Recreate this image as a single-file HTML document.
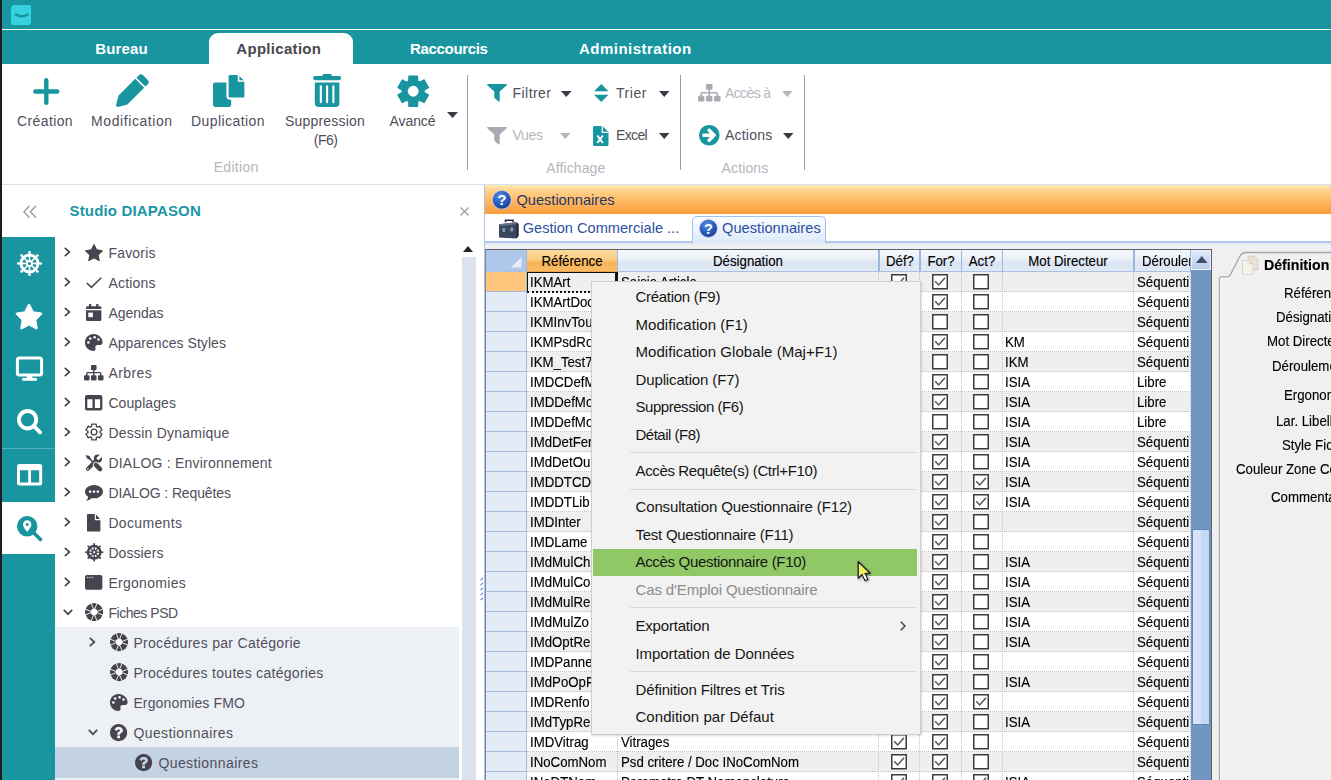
<!DOCTYPE html>
<html lang="fr"><head><meta charset="utf-8"><title>Studio DIAPASON</title>
<style>
html,body{margin:0;padding:0;}
body{width:1331px;height:780px;overflow:hidden;position:relative;background:#fff;font-family:"Liberation Sans",sans-serif;}
#app{position:absolute;left:0;top:0;width:1331px;height:780px;overflow:hidden;}
svg{display:block;overflow:visible}
</style></head><body><div id="app">
<div style="position:absolute;left:0px;top:0px;width:1331px;height:30px;background:#18959f;"></div>
<div style="position:absolute;left:0px;top:29px;width:1331px;height:1.2px;background:#f4fbfb;"></div>
<div style="position:absolute;left:0px;top:30px;width:1331px;height:34px;background:#18959f;"></div>
<div style="position:absolute;left:11.3px;top:4.9px;width:20.2px;height:20.2px;background:#35d1de;border-radius:3.5px 1.5px 3px 1px"></div>
<svg style="position:absolute;left:14px;top:12px;" width="16" height="7" viewBox="0 0 16 7"><path d="M1.800 2.500Q7.700 6 13.600 2.500" fill="none" stroke="#1b919c" stroke-width="2.400" stroke-linecap="round"/></svg>
<div style="position:absolute;left:209px;top:33px;width:144px;height:32px;background:#fff;border-radius:9px 9px 0 0"></div>
<span style="position:absolute;white-space:nowrap;left:121.5px;top:38.6px;line-height:20px;font-size:15px;color:#fff;font-weight:bold;letter-spacing:0.17px;transform:translateX(-50%);">Bureau</span>
<span style="position:absolute;white-space:nowrap;left:278.8px;top:38.6px;line-height:20px;font-size:15px;color:#4a4650;font-weight:bold;letter-spacing:0.3px;transform:translateX(-50%);">Application</span>
<span style="position:absolute;white-space:nowrap;left:448.8px;top:38.6px;line-height:20px;font-size:15px;color:#fff;font-weight:bold;letter-spacing:-0.34px;transform:translateX(-50%);">Raccourcis</span>
<span style="position:absolute;white-space:nowrap;left:635.3px;top:38.6px;line-height:20px;font-size:15px;color:#fff;font-weight:bold;letter-spacing:0.48px;transform:translateX(-50%);">Administration</span>
<div style="position:absolute;left:0px;top:64px;width:1331px;height:120px;background:#fff;"></div>
<div style="position:absolute;left:0px;top:184px;width:1331px;height:1px;background:#d3e2ec;"></div>
<svg style="position:absolute;left:32.6px;top:78px;" width="26.6" height="27" viewBox="0 0 26.6 27"><path d="M13.3 2.3V24.700M2.300 13.500H24.300" stroke="#18959f" stroke-width="4.400" stroke-linecap="round"/></svg>
<span style="position:absolute;white-space:nowrap;left:45px;top:111.0px;line-height:20px;font-size:14px;color:#514e5c;font-weight:normal;letter-spacing:0.39px;transform:translateX(-50%);">Création</span>
<svg style="position:absolute;left:116.2px;top:74.4px;" width="33" height="33" viewBox="0 0 33 33"><g transform="translate(16.5 16.5) rotate(-45)" fill="#18959f"><path d="M-13.6 -6.300H10.200V6.300H-13.600L-22 1.300Q-23.200 0 -22 -1.300z"/><path d="M11.900 -6.300H15.300a3 3 0 0 1 3 3V3.300a3 3 0 0 1 -3 3H11.900z"/></g></svg>
<span style="position:absolute;white-space:nowrap;left:131.9px;top:111.0px;line-height:20px;font-size:14px;color:#514e5c;font-weight:normal;letter-spacing:0.58px;transform:translateX(-50%);">Modification</span>
<svg style="position:absolute;left:212.5px;top:74.4px;" width="33" height="33.2" viewBox="0 0 33 33.2"><rect x="0" y="8.400" width="18.200" height="24.700" rx="2.300" fill="#18959f"/><path d="M14.500 2.300A2.300 2.300 0 0 1 16.800 0H26L32.500 6.500V22.300a2.300 2.300 0 0 1 -2.300 2.300H16.800a2.300 2.300 0 0 1 -2.300 -2.300z" fill="#18959f" stroke="#fff" stroke-width="2.200"/><path d="M25.600 -1V7H33.500" fill="none" stroke="#fff" stroke-width="1.700"/></svg>
<span style="position:absolute;white-space:nowrap;left:228px;top:111.0px;line-height:20px;font-size:14px;color:#514e5c;font-weight:normal;letter-spacing:0.43px;transform:translateX(-50%);">Duplication</span>
<svg style="position:absolute;left:313px;top:74.4px;" width="28.2" height="33.1" viewBox="0 0 28.2 33.1"><rect x="0" y="1.900" width="28.200" height="4.300" rx="2.150" fill="#18959f"/><path d="M8.400 3L10 0.400Q10.300 0 10.800 0H17.400Q17.900 0 18.200 0.400L19.800 3z" fill="#18959f"/><path d="M1.800 8.400H26.400V29.100a4 4 0 0 1 -4 4H5.800a4 4 0 0 1 -4 -4z" fill="#18959f"/><path d="M7.800 12.300V28.200M14.100 12.300V28.200M20.400 12.300V28.200" stroke="#fff" stroke-width="2.100" stroke-linecap="round"/></svg>
<span style="position:absolute;white-space:nowrap;left:325px;top:111.0px;line-height:20px;font-size:14px;color:#514e5c;font-weight:normal;letter-spacing:0.2px;transform:translateX(-50%);">Suppression</span>
<span style="position:absolute;white-space:nowrap;left:325.6px;top:130.0px;line-height:20px;font-size:14px;color:#514e5c;font-weight:normal;letter-spacing:-0.47px;transform:translateX(-50%);">(F6)</span>
<svg style="position:absolute;left:396.5px;top:74.6px;" width="32.4" height="32.5" viewBox="-16.2 -16.250 32.400 32.500"><path d="M4.21 -9.95 L4.11 -14.84 L-4.11 -14.84 L-4.21 -9.95 L-6.51 -8.62 L-10.80 -10.98 L-14.91 -3.86 L-10.72 -1.33 L-10.72 1.33 L-14.91 3.86 L-10.80 10.98 L-6.51 8.62 L-4.21 9.95 L-4.11 14.84 L4.11 14.84 L4.21 9.95 L6.51 8.62 L10.80 10.98 L14.91 3.86 L10.72 1.33 L10.72 -1.33 L14.91 -3.86 L10.80 -10.98 L6.51 -8.62z" fill="#18959f" stroke="#18959f" stroke-width="1.800" stroke-linejoin="round"/><circle r="10.900" fill="#18959f"/><circle r="5.400" fill="#fff"/></svg>
<span style="position:absolute;white-space:nowrap;left:412.5px;top:111.0px;line-height:20px;font-size:14px;color:#514e5c;font-weight:normal;letter-spacing:-0.07px;transform:translateX(-50%);">Avancé</span>
<svg style="position:absolute;left:446.5px;top:112px;" width="11" height="6" viewBox="0 0 11 6"><path d="M0 0h11l-5.5 6z" fill="#3c3946"/></svg>
<span style="position:absolute;white-space:nowrap;left:236.2px;top:157.0px;line-height:20px;font-size:14px;color:#b4b6c0;font-weight:normal;letter-spacing:0.31px;transform:translateX(-50%);">Edition</span>
<div style="position:absolute;left:467px;top:75px;width:1.4px;height:95px;background:#9b9ca6;"></div>
<div style="position:absolute;left:680px;top:75px;width:1.4px;height:95px;background:#9b9ca6;"></div>
<div style="position:absolute;left:804px;top:75px;width:1.4px;height:95px;background:#9b9ca6;"></div>
<svg style="position:absolute;left:487px;top:84px;" width="20.00" height="17.50" viewBox="-1.0208333333333357 -1280 1410.0416666666665 1408" preserveAspectRatio="none"><path transform="scale(1,-1)" fill="#18959f" d="M1403 1241Q1420 1200 1389 1171L896 678V-64Q896 -106 857 -123Q844 -128 832 -128Q805 -128 787 -109L531 147Q512 166 512 192V678L19 1171Q-12 1200 5 1241Q22 1280 64 1280H1344Q1386 1280 1403 1241Z"/></svg>
<span style="position:absolute;white-space:nowrap;left:512.5px;top:82.5px;line-height:20px;font-size:14px;color:#514e5c;font-weight:normal;letter-spacing:0.46px;">Filtrer</span>
<svg style="position:absolute;left:560.5px;top:90.5px;" width="10.5" height="6" viewBox="0 0 10.5 6"><path d="M0 0h10.5l-5.25 6z" fill="#3c3946"/></svg>
<svg style="position:absolute;left:593.5px;top:84px;" width="14.5" height="18" viewBox="0 0 14.5 18"><path d="M7.25 0l7.25 7.3H0zM7.25 18l7.25-7.3H0z" fill="#18959f"/></svg>
<span style="position:absolute;white-space:nowrap;left:616px;top:82.5px;line-height:20px;font-size:14px;color:#514e5c;font-weight:normal;letter-spacing:0.55px;">Trier</span>
<svg style="position:absolute;left:659px;top:90.5px;" width="10.5" height="6" viewBox="0 0 10.5 6"><path d="M0 0h10.5l-5.25 6z" fill="#3c3946"/></svg>
<svg style="position:absolute;left:698px;top:84px;" width="22.50" height="17.50" viewBox="0 -1408 1792 1536" preserveAspectRatio="none"><path transform="scale(1,-1)" fill="#a9abb3" d="M1792 288V-32Q1792 -72 1764.0 -100.0Q1736 -128 1696 -128H1376Q1336 -128 1308.0 -100.0Q1280 -72 1280 -32V288Q1280 328 1308.0 356.0Q1336 384 1376 384H1472V576H960V384H1056Q1096 384 1124.0 356.0Q1152 328 1152 288V-32Q1152 -72 1124.0 -100.0Q1096 -128 1056 -128H736Q696 -128 668.0 -100.0Q640 -72 640 -32V288Q640 328 668.0 356.0Q696 384 736 384H832V576H320V384H416Q456 384 484.0 356.0Q512 328 512 288V-32Q512 -72 484.0 -100.0Q456 -128 416 -128H96Q56 -128 28.0 -100.0Q0 -72 0 -32V288Q0 328 28.0 356.0Q56 384 96 384H192V576Q192 628 230.0 666.0Q268 704 320 704H832V896H736Q696 896 668.0 924.0Q640 952 640 992V1312Q640 1352 668.0 1380.0Q696 1408 736 1408H1056Q1096 1408 1124.0 1380.0Q1152 1352 1152 1312V992Q1152 952 1124.0 924.0Q1096 896 1056 896H960V704H1472Q1524 704 1562.0 666.0Q1600 628 1600 576V384H1696Q1736 384 1764.0 356.0Q1792 328 1792 288Z"/></svg>
<span style="position:absolute;white-space:nowrap;left:725px;top:82.5px;line-height:20px;font-size:14px;color:#b4b6c0;font-weight:normal;letter-spacing:-0.61px;">Accès à</span>
<svg style="position:absolute;left:781.5px;top:90.5px;" width="10.5" height="6" viewBox="0 0 10.5 6"><path d="M0 0h10.5l-5.25 6z" fill="#b4b6c0"/></svg>
<svg style="position:absolute;left:487px;top:126.5px;" width="20.00" height="17.50" viewBox="-1.0208333333333357 -1280 1410.0416666666665 1408" preserveAspectRatio="none"><path transform="scale(1,-1)" fill="#a9abb3" d="M1403 1241Q1420 1200 1389 1171L896 678V-64Q896 -106 857 -123Q844 -128 832 -128Q805 -128 787 -109L531 147Q512 166 512 192V678L19 1171Q-12 1200 5 1241Q22 1280 64 1280H1344Q1386 1280 1403 1241Z"/></svg>
<span style="position:absolute;white-space:nowrap;left:512.5px;top:125.0px;line-height:20px;font-size:14px;color:#b4b6c0;font-weight:normal;letter-spacing:-0.27px;">Vues</span>
<svg style="position:absolute;left:560px;top:133px;" width="10.5" height="6" viewBox="0 0 10.5 6"><path d="M0 0h10.5l-5.25 6z" fill="#b4b6c0"/></svg>
<svg style="position:absolute;left:593px;top:125.5px;" width="15.5" height="20" viewBox="0 0 15.5 20"><path d="M0 1.5A1.5 1.5 0 0 1 1.5 0H9.5l6 6v12.5a1.5 1.5 0 0 1-1.5 1.5H1.5A1.5 1.5 0 0 1 0 18.5z" fill="#18959f"/><path d="M9.3 0.3v6h6" fill="none" stroke="#fff" stroke-width="1.3"/><path d="M4.3 9.5l5.6 7.5M9.9 9.5l-5.6 7.5" stroke="#fff" stroke-width="2" /></svg>
<span style="position:absolute;white-space:nowrap;left:616px;top:125.0px;line-height:20px;font-size:14px;color:#514e5c;font-weight:normal;letter-spacing:-0.65px;">Excel</span>
<svg style="position:absolute;left:659px;top:133px;" width="10.5" height="6" viewBox="0 0 10.5 6"><path d="M0 0h10.5l-5.25 6z" fill="#3c3946"/></svg>
<svg style="position:absolute;left:699px;top:125px;" width="20.50" height="20.50" viewBox="0.0 -1408.0 1536.0 1536.0" preserveAspectRatio="none"><path transform="scale(1,-1)" fill="#18959f" d="M1267 685 1176 776 814 1138Q796 1156 769.0 1156.0Q742 1156 724 1138L633 1047Q615 1029 615.0 1002.0Q615 975 633 957L822 768H320Q294 768 275.0 749.0Q256 730 256 704V576Q256 550 275.0 531.0Q294 512 320 512H822L633 323Q614 304 614.0 278.0Q614 252 633 233L724 142Q742 124 769.0 124.0Q796 124 814 142L1176 504L1267 595Q1285 613 1285.0 640.0Q1285 667 1267 685ZM1433.0 1025.5Q1536 849 1536.0 640.0Q1536 431 1433.0 254.5Q1330 78 1153.5 -25.0Q977 -128 768.0 -128.0Q559 -128 382.5 -25.0Q206 78 103.0 254.5Q0 431 0.0 640.0Q0 849 103.0 1025.5Q206 1202 382.5 1305.0Q559 1408 768.0 1408.0Q977 1408 1153.5 1305.0Q1330 1202 1433.0 1025.5Z"/></svg>
<span style="position:absolute;white-space:nowrap;left:725px;top:125.0px;line-height:20px;font-size:14px;color:#514e5c;font-weight:normal;letter-spacing:0.21px;">Actions</span>
<svg style="position:absolute;left:783px;top:133px;" width="10.5" height="6" viewBox="0 0 10.5 6"><path d="M0 0h10.5l-5.25 6z" fill="#3c3946"/></svg>
<span style="position:absolute;white-space:nowrap;left:575.8px;top:157.5px;line-height:20px;font-size:14px;color:#b4b6c0;font-weight:normal;letter-spacing:0.12px;transform:translateX(-50%);">Affichage</span>
<span style="position:absolute;white-space:nowrap;left:745px;top:157.5px;line-height:20px;font-size:14px;color:#b4b6c0;font-weight:normal;letter-spacing:0.13px;transform:translateX(-50%);">Actions</span>
<svg style="position:absolute;left:23px;top:204.5px;" width="14" height="13.5" viewBox="0 0 14 13.5"><path d="M6.5 0.7L1 6.75l5.5 6.05M13 0.7L7.5 6.75l5.5 6.05" fill="none" stroke="#9c9eaa" stroke-width="1.5"/></svg>
<span style="position:absolute;white-space:nowrap;left:69.5px;top:200.5px;line-height:20px;font-size:15px;color:#1a96a6;font-weight:bold;letter-spacing:0.17px;">Studio DIAPASON</span>
<svg style="position:absolute;left:459.5px;top:207px;" width="9" height="9" viewBox="0 0 9 9"><path d="M0.5 0.5l8 8M8.5 0.5l-8 8" stroke="#9c9eaa" stroke-width="1.3"/></svg>
<div style="position:absolute;left:2px;top:237px;width:52.5px;height:543px;background:#18959f;"></div>
<div style="position:absolute;left:2px;top:501.6px;width:52.5px;height:52.6px;background:#fff;"></div>
<div style="position:absolute;left:2px;top:447.6px;width:52.5px;height:1.2px;background:#4fb3bb;"></div>
<svg style="position:absolute;left:16.5px;top:250.5px;" width="25.0" height="25.0" viewBox="-12.5 -12.5 25.0 25.0"><circle cx="0" cy="0" r="8.5" fill="none" stroke="#fff" stroke-width="3"/><circle cx="0" cy="0" r="2.5" fill="none" stroke="#fff" stroke-width="1.7999999999999998"/><path d="M2.50 0.00L11.00 0.00" stroke="#fff" stroke-width="1.6500000000000001"/><circle cx="11.25" cy="0.00" r="1.31" fill="#fff"/><path d="M1.77 1.77L7.78 7.78" stroke="#fff" stroke-width="1.6500000000000001"/><circle cx="7.95" cy="7.95" r="1.31" fill="#fff"/><path d="M0.00 2.50L0.00 11.00" stroke="#fff" stroke-width="1.6500000000000001"/><circle cx="0.00" cy="11.25" r="1.31" fill="#fff"/><path d="M-1.77 1.77L-7.78 7.78" stroke="#fff" stroke-width="1.6500000000000001"/><circle cx="-7.95" cy="7.95" r="1.31" fill="#fff"/><path d="M-2.50 0.00L-11.00 0.00" stroke="#fff" stroke-width="1.6500000000000001"/><circle cx="-11.25" cy="0.00" r="1.31" fill="#fff"/><path d="M-1.77 -1.77L-7.78 -7.78" stroke="#fff" stroke-width="1.6500000000000001"/><circle cx="-7.95" cy="-7.95" r="1.31" fill="#fff"/><path d="M-0.00 -2.50L-0.00 -11.00" stroke="#fff" stroke-width="1.6500000000000001"/><circle cx="-0.00" cy="-11.25" r="1.31" fill="#fff"/><path d="M1.77 -1.77L7.78 -7.78" stroke="#fff" stroke-width="1.6500000000000001"/><circle cx="7.95" cy="-7.95" r="1.31" fill="#fff"/></svg>
<svg style="position:absolute;left:16px;top:303.5px;" width="26.00" height="25.00" viewBox="0 -1504.0 1664 1587.0" preserveAspectRatio="none"><path transform="scale(1,-1)" fill="#fff" stroke="#fff" stroke-width="60" d="M1664 889Q1664 867 1638 841L1275 487L1361 -13Q1362 -20 1362 -33Q1362 -54 1351.5 -68.5Q1341 -83 1321 -83Q1302 -83 1281 -71L832 165L383 -71Q361 -83 343 -83Q322 -83 311.5 -68.5Q301 -54 301 -33Q301 -27 303 -13L389 487L25 841Q0 868 0 889Q0 926 56 935L558 1008L783 1463Q802 1504 832.0 1504.0Q862 1504 881 1463L1106 1008L1608 935Q1664 926 1664 889Z"/></svg>
<svg style="position:absolute;left:15px;top:355px;" width="29" height="27" viewBox="0 0 29 27"><rect x="2.400" y="3" width="24.200" height="17" rx="2" fill="none" stroke="#fff" stroke-width="3"/><path d="M11.800 21h5.400l0.600 3h-6.600z" fill="#fff"/><rect x="7" y="23" width="15" height="2.800" rx="1.200" fill="#fff"/></svg>
<svg style="position:absolute;left:16.8px;top:408.5px;" width="25.00" height="25.30" viewBox="0.0 -1408.0 1664.0 1664.0" preserveAspectRatio="none"><path transform="scale(1,-1)" fill="#fff" d="M1020.5 387.5Q1152 519 1152.0 704.0Q1152 889 1020.5 1020.5Q889 1152 704.0 1152.0Q519 1152 387.5 1020.5Q256 889 256.0 704.0Q256 519 387.5 387.5Q519 256 704.0 256.0Q889 256 1020.5 387.5ZM1664 -128Q1664 -180 1626.0 -218.0Q1588 -256 1536 -256Q1482 -256 1446 -218L1103 124Q924 0 704 0Q561 0 430.5 55.5Q300 111 205.5 205.5Q111 300 55.5 430.5Q0 561 0.0 704.0Q0 847 55.5 977.5Q111 1108 205.5 1202.5Q300 1297 430.5 1352.5Q561 1408 704.0 1408.0Q847 1408 977.5 1352.5Q1108 1297 1202.5 1202.5Q1297 1108 1352.5 977.5Q1408 847 1408 704Q1408 484 1284 305L1627 -38Q1664 -75 1664 -128Z"/></svg>
<svg style="position:absolute;left:16.8px;top:464px;" preserveAspectRatio="none" width="25.2" height="21.6" viewBox="0 0 25.2 21.6"><path fill-rule="evenodd" fill="#fff" d="M2.500 0H22.700a2.500 2.500 0 0 1 2.500 2.500V19.100a2.500 2.500 0 0 1 -2.500 2.500H2.500a2.500 2.500 0 0 1 -2.500 -2.500V2.500a2.500 2.500 0 0 1 2.500 -2.500zM3 6.200V18.600H11.200V6.200zM14 6.200V18.600H22.200V6.200z"/></svg>
<svg style="position:absolute;left:16.8px;top:516px;" width="25.2" height="25.2" viewBox="0 0 25.2 25.2"><path d="M16.500 16.500L23.500 23.500" stroke="#18959f" stroke-width="3.600" stroke-linecap="round"/><circle cx="10.200" cy="10.200" r="10.200" fill="#18959f"/><path d="M10.200 4.300c-2.400 0-4.200 1.800-4.200 4.100 0 2.600 3 5.600 4.200 7.700 1.200-2.100 4.200-5.100 4.200-7.700 0-2.300-1.800-4.100-4.200-4.100z" fill="#fff"/><circle cx="10.200" cy="8.400" r="1.500" fill="#18959f"/></svg>
<div style="position:absolute;left:54.5px;top:627px;width:404.5px;height:153px;background:#edf1f5;"></div>
<div style="position:absolute;left:54.5px;top:747px;width:404.5px;height:30.5px;background:#c4d3e3;"></div>
<svg style="position:absolute;left:64px;top:247.0px;" width="7" height="10" viewBox="0 0 7 10"><path d="M0.8 0.8L5.4 5L0.8 9.2" fill="none" stroke="#4b4856" stroke-width="1.7"/></svg>
<svg style="position:absolute;left:84.8px;top:243.60000000000002px;" width="18.00" height="17.20" viewBox="0 -1504.0 1664 1587.0" preserveAspectRatio="none"><path transform="scale(1,-1)" fill="#47444f" d="M1664 889Q1664 867 1638 841L1275 487L1361 -13Q1362 -20 1362 -33Q1362 -54 1351.5 -68.5Q1341 -83 1321 -83Q1302 -83 1281 -71L832 165L383 -71Q361 -83 343 -83Q322 -83 311.5 -68.5Q301 -54 301 -33Q301 -27 303 -13L389 487L25 841Q0 868 0 889Q0 926 56 935L558 1008L783 1463Q802 1504 832.0 1504.0Q862 1504 881 1463L1106 1008L1608 935Q1664 926 1664 889Z"/></svg>
<span style="position:absolute;white-space:nowrap;left:108.4px;top:242.5px;line-height:20px;font-size:14px;color:#514e5c;font-weight:normal;letter-spacing:0.21px;">Favoris</span>
<svg style="position:absolute;left:64px;top:277.0px;" width="7" height="10" viewBox="0 0 7 10"><path d="M0.8 0.8L5.4 5L0.8 9.2" fill="none" stroke="#4b4856" stroke-width="1.7"/></svg>
<svg style="position:absolute;left:85.8px;top:276.8px;" width="16" height="11.5" viewBox="0 0 16 11.5"><path d="M0.8 6L5.4 10.3L15.2 0.8" fill="none" stroke="#47444f" stroke-width="1.6"/></svg>
<span style="position:absolute;white-space:nowrap;left:108.4px;top:272.5px;line-height:20px;font-size:14px;color:#514e5c;font-weight:normal;letter-spacing:0.21px;">Actions</span>
<svg style="position:absolute;left:64px;top:307.0px;" width="7" height="10" viewBox="0 0 7 10"><path d="M0.8 0.8L5.4 5L0.8 9.2" fill="none" stroke="#4b4856" stroke-width="1.7"/></svg>
<svg style="position:absolute;left:86.1px;top:303.8px;" width="15.4" height="17" viewBox="0 0 15.4 17"><path d="M3 0h2.2v2.2h5V0h2.2v2.2h1.5a1.5 1.5 0 0 1 1.5 1.5V5H0V3.7a1.5 1.5 0 0 1 1.5-1.5H3zM0 6.3h15.4v9.2a1.5 1.5 0 0 1-1.5 1.5H1.5A1.5 1.5 0 0 1 0 15.5z" fill="#47444f"/><rect x="2.3" y="8.6" width="4.6" height="4.6" fill="#fff"/></svg>
<span style="position:absolute;white-space:nowrap;left:108.4px;top:302.5px;line-height:20px;font-size:14px;color:#514e5c;font-weight:normal;letter-spacing:-0.02px;">Agendas</span>
<svg style="position:absolute;left:64px;top:337.0px;" width="7" height="10" viewBox="0 0 7 10"><path d="M0.8 0.8L5.4 5L0.8 9.2" fill="none" stroke="#4b4856" stroke-width="1.7"/></svg>
<svg style="position:absolute;left:85.0px;top:333.8px;" width="17.6" height="17" viewBox="0 0 17.6 17"><path d="M8.6 0C3.6 0 0 3.9 0 8.5S3.7 17 8.4 17c1.6 0 2.6-1.3 2.1-2.7-.6-1.6.4-3.3 2.2-3.3h2.5c1.4 0 2.4-1 2.4-2.5C17.5 3.600 13.6 0 8.600 0z" fill="#47444f"/><circle cx="3.4" cy="8.600" r="1.25" fill="#fff"/><circle cx="5.2" cy="4.5" r="1.25" fill="#fff"/><circle cx="9.6" cy="3.2" r="1.25" fill="#fff"/><circle cx="13.5" cy="5.4" r="1.25" fill="#fff"/></svg>
<span style="position:absolute;white-space:nowrap;left:108.4px;top:332.5px;line-height:20px;font-size:14px;color:#514e5c;font-weight:normal;letter-spacing:0.05px;">Apparences Styles</span>
<svg style="position:absolute;left:64px;top:367.0px;" width="7" height="10" viewBox="0 0 7 10"><path d="M0.8 0.8L5.4 5L0.8 9.2" fill="none" stroke="#4b4856" stroke-width="1.7"/></svg>
<svg style="position:absolute;left:84.0px;top:364.6px;" width="19.50" height="15.40" viewBox="0 -1408 1792 1536" preserveAspectRatio="none"><path transform="scale(1,-1)" fill="#47444f" d="M1792 288V-32Q1792 -72 1764.0 -100.0Q1736 -128 1696 -128H1376Q1336 -128 1308.0 -100.0Q1280 -72 1280 -32V288Q1280 328 1308.0 356.0Q1336 384 1376 384H1472V576H960V384H1056Q1096 384 1124.0 356.0Q1152 328 1152 288V-32Q1152 -72 1124.0 -100.0Q1096 -128 1056 -128H736Q696 -128 668.0 -100.0Q640 -72 640 -32V288Q640 328 668.0 356.0Q696 384 736 384H832V576H320V384H416Q456 384 484.0 356.0Q512 328 512 288V-32Q512 -72 484.0 -100.0Q456 -128 416 -128H96Q56 -128 28.0 -100.0Q0 -72 0 -32V288Q0 328 28.0 356.0Q56 384 96 384H192V576Q192 628 230.0 666.0Q268 704 320 704H832V896H736Q696 896 668.0 924.0Q640 952 640 992V1312Q640 1352 668.0 1380.0Q696 1408 736 1408H1056Q1096 1408 1124.0 1380.0Q1152 1352 1152 1312V992Q1152 952 1124.0 924.0Q1096 896 1056 896H960V704H1472Q1524 704 1562.0 666.0Q1600 628 1600 576V384H1696Q1736 384 1764.0 356.0Q1792 328 1792 288Z"/></svg>
<span style="position:absolute;white-space:nowrap;left:108.4px;top:362.5px;line-height:20px;font-size:14px;color:#514e5c;font-weight:normal;letter-spacing:0.44px;">Arbres</span>
<svg style="position:absolute;left:64px;top:397.0px;" width="7" height="10" viewBox="0 0 7 10"><path d="M0.8 0.8L5.4 5L0.8 9.2" fill="none" stroke="#4b4856" stroke-width="1.7"/></svg>
<svg style="position:absolute;left:85.1px;top:394.6px;" width="17.4" height="15.4" viewBox="0 0 17.4 15.4"><path fill-rule="evenodd" fill="#47444f" d="M2 0H15.400a2 2 0 0 1 2 2V13.400a2 2 0 0 1 -2 2H2a2 2 0 0 1 -2 -2V2a2 2 0 0 1 2 -2zM2.300 4.300V13.100H7.500V4.300zM9.900 4.300V13.100H15.100V4.300z"/></svg>
<span style="position:absolute;white-space:nowrap;left:108.4px;top:392.5px;line-height:20px;font-size:14px;color:#514e5c;font-weight:normal;letter-spacing:0.07px;">Couplages</span>
<svg style="position:absolute;left:64px;top:427.0px;" width="7" height="10" viewBox="0 0 7 10"><path d="M0.8 0.8L5.4 5L0.8 9.2" fill="none" stroke="#4b4856" stroke-width="1.7"/></svg>
<svg style="position:absolute;left:84.8px;top:423.3px;" width="18" height="18" viewBox="-9 -9 18 18"><path d="M2.38 -5.62 L2.19 -7.90 L-2.19 -7.90 L-2.38 -5.62 L-3.68 -4.87 L-5.75 -5.85 L-7.94 -2.06 L-6.05 -0.75 L-6.05 0.75 L-7.94 2.06 L-5.75 5.85 L-3.68 4.87 L-2.38 5.62 L-2.19 7.90 L2.19 7.90 L2.38 5.62 L3.68 4.87 L5.75 5.85 L7.94 2.06 L6.05 0.75 L6.05 -0.75 L7.94 -2.06 L5.75 -5.85 L3.68 -4.87z" fill="none" stroke="#47444f" stroke-width="1.350" stroke-linejoin="round"/><circle r="2.900" fill="none" stroke="#47444f" stroke-width="1.350"/></svg>
<span style="position:absolute;white-space:nowrap;left:108.4px;top:422.5px;line-height:20px;font-size:14px;color:#514e5c;font-weight:normal;letter-spacing:0.23px;">Dessin Dynamique</span>
<svg style="position:absolute;left:64px;top:457.0px;" width="7" height="10" viewBox="0 0 7 10"><path d="M0.8 0.8L5.4 5L0.8 9.2" fill="none" stroke="#4b4856" stroke-width="1.7"/></svg>
<svg style="position:absolute;left:85.0px;top:453.5px;" width="17.6" height="17.6" viewBox="0 0 17.6 17.6"><path d="M2.800 14.800L11.500 6.100" stroke="#47444f" stroke-width="3.800" stroke-linecap="round"/><circle cx="12.900" cy="4.700" r="4.100" fill="#47444f"/><path d="M12.300 5.300L18 -0.400" stroke="#fff" stroke-width="3"/><circle cx="2.900" cy="14.700" r="0.800" fill="#fff"/><path d="M0.300 0.700L4.600 1.700L6.300 5.100L5.100 6.300L1.700 4.600z" fill="#47444f" stroke="#fff" stroke-width="0.500"/><path d="M5 5L9.500 9.500" stroke="#47444f" stroke-width="1.700"/><path d="M10.900 10.900L15.100 15.100" stroke="#fff" stroke-width="6" stroke-linecap="round"/><path d="M10.900 10.900L15.100 15.100" stroke="#47444f" stroke-width="4.400" stroke-linecap="round"/></svg>
<span style="position:absolute;white-space:nowrap;left:108.4px;top:452.5px;line-height:20px;font-size:14px;color:#514e5c;font-weight:normal;letter-spacing:0.22px;">DIALOG : Environnement</span>
<svg style="position:absolute;left:64px;top:487.0px;" width="7" height="10" viewBox="0 0 7 10"><path d="M0.8 0.8L5.4 5L0.8 9.2" fill="none" stroke="#4b4856" stroke-width="1.7"/></svg>
<svg style="position:absolute;left:84.8px;top:484.5px;" width="18.00" height="15.60" viewBox="0 -1280.0 1792.0 1504.125" preserveAspectRatio="none"><path transform="scale(1,-1)" fill="#47444f" d="M602.5 549.5Q640 587 640.0 640.0Q640 693 602.5 730.5Q565 768 512.0 768.0Q459 768 421.5 730.5Q384 693 384.0 640.0Q384 587 421.5 549.5Q459 512 512.0 512.0Q565 512 602.5 549.5ZM986.5 549.5Q1024 587 1024.0 640.0Q1024 693 986.5 730.5Q949 768 896.0 768.0Q843 768 805.5 730.5Q768 693 768.0 640.0Q768 587 805.5 549.5Q843 512 896.0 512.0Q949 512 986.5 549.5ZM1370.5 549.5Q1408 587 1408.0 640.0Q1408 693 1370.5 730.5Q1333 768 1280.0 768.0Q1227 768 1189.5 730.5Q1152 693 1152.0 640.0Q1152 587 1189.5 549.5Q1227 512 1280.0 512.0Q1333 512 1370.5 549.5ZM896 0Q786 0 685 18Q512 -155 250 -211Q198 -221 164 -224Q152 -225 142.0 -218.0Q132 -211 129 -200Q125 -185 149 -163Q154 -158 172.5 -141.5Q191 -125 198.0 -118.0Q205 -111 221.5 -92.5Q238 -74 245.5 -61.0Q253 -48 266.0 -24.0Q279 0 286.0 24.0Q293 48 300.5 81.5Q308 115 313 154Q167 244 83.5 370.5Q0 497 0 640Q0 814 120.0 961.5Q240 1109 446.0 1194.5Q652 1280 896.0 1280.0Q1140 1280 1346.0 1194.5Q1552 1109 1672.0 961.5Q1792 814 1792.0 640.0Q1792 466 1672.0 318.5Q1552 171 1346.0 85.5Q1140 0 896 0Z"/></svg>
<span style="position:absolute;white-space:nowrap;left:108.4px;top:482.5px;line-height:20px;font-size:14px;color:#514e5c;font-weight:normal;letter-spacing:-0.12px;">DIALOG : Requêtes</span>
<svg style="position:absolute;left:64px;top:517.0px;" width="7" height="10" viewBox="0 0 7 10"><path d="M0.8 0.8L5.4 5L0.8 9.2" fill="none" stroke="#4b4856" stroke-width="1.7"/></svg>
<svg style="position:absolute;left:87.1px;top:513.5px;" width="13.40" height="17.60" viewBox="0 -1536 1536 1792" preserveAspectRatio="none"><path transform="scale(1,-1)" fill="#47444f" d="M1024 1024V1496Q1046 1482 1060 1468L1468 1060Q1482 1046 1496 1024ZM896 992Q896 952 924.0 924.0Q952 896 992 896H1536V-160Q1536 -200 1508.0 -228.0Q1480 -256 1440 -256H96Q56 -256 28.0 -228.0Q0 -200 0 -160V1440Q0 1480 28.0 1508.0Q56 1536 96 1536H896Z"/></svg>
<span style="position:absolute;white-space:nowrap;left:108.4px;top:512.5px;line-height:20px;font-size:14px;color:#514e5c;font-weight:normal;letter-spacing:0.34px;">Documents</span>
<svg style="position:absolute;left:64px;top:547.0px;" width="7" height="10" viewBox="0 0 7 10"><path d="M0.8 0.8L5.4 5L0.8 9.2" fill="none" stroke="#4b4856" stroke-width="1.7"/></svg>
<svg style="position:absolute;left:84.6px;top:543.0999999999999px;" width="18.4" height="18.4" viewBox="-9.2 -9.2 18.4 18.4"><circle cx="0" cy="0" r="6.256" fill="none" stroke="#47444f" stroke-width="2.5"/><circle cx="0" cy="0" r="1.8399999999999999" fill="none" stroke="#47444f" stroke-width="1.5"/><path d="M1.84 0.00L8.10 0.00" stroke="#47444f" stroke-width="1.375"/><circle cx="8.28" cy="0.00" r="0.97" fill="#47444f"/><path d="M1.30 1.30L5.72 5.72" stroke="#47444f" stroke-width="1.375"/><circle cx="5.85" cy="5.85" r="0.97" fill="#47444f"/><path d="M0.00 1.84L0.00 8.10" stroke="#47444f" stroke-width="1.375"/><circle cx="0.00" cy="8.28" r="0.97" fill="#47444f"/><path d="M-1.30 1.30L-5.72 5.72" stroke="#47444f" stroke-width="1.375"/><circle cx="-5.85" cy="5.85" r="0.97" fill="#47444f"/><path d="M-1.84 0.00L-8.10 0.00" stroke="#47444f" stroke-width="1.375"/><circle cx="-8.28" cy="0.00" r="0.97" fill="#47444f"/><path d="M-1.30 -1.30L-5.72 -5.72" stroke="#47444f" stroke-width="1.375"/><circle cx="-5.85" cy="-5.85" r="0.97" fill="#47444f"/><path d="M-0.00 -1.84L-0.00 -8.10" stroke="#47444f" stroke-width="1.375"/><circle cx="-0.00" cy="-8.28" r="0.97" fill="#47444f"/><path d="M1.30 -1.30L5.72 -5.72" stroke="#47444f" stroke-width="1.375"/><circle cx="5.85" cy="-5.85" r="0.97" fill="#47444f"/></svg>
<span style="position:absolute;white-space:nowrap;left:108.4px;top:542.5px;line-height:20px;font-size:14px;color:#514e5c;font-weight:normal;letter-spacing:0.08px;">Dossiers</span>
<svg style="position:absolute;left:64px;top:577.0px;" width="7" height="10" viewBox="0 0 7 10"><path d="M0.8 0.8L5.4 5L0.8 9.2" fill="none" stroke="#4b4856" stroke-width="1.7"/></svg>
<svg style="position:absolute;left:85.1px;top:574.9px;" width="17.4" height="14.8" viewBox="0 0 17.4 14.8"><rect width="17.400" height="14.800" rx="2" fill="#47444f"/><circle cx="2.600" cy="2.500" r="0.800" fill="#c9c9d0"/><circle cx="4.900" cy="2.500" r="0.800" fill="#c9c9d0"/><circle cx="7.200" cy="2.500" r="0.800" fill="#c9c9d0"/></svg>
<span style="position:absolute;white-space:nowrap;left:108.4px;top:572.5px;line-height:20px;font-size:14px;color:#514e5c;font-weight:normal;letter-spacing:0.29px;">Ergonomies</span>
<svg style="position:absolute;left:62.5px;top:609.0px;" width="10" height="6.5" viewBox="0 0 10 6.5"><path d="M0.8 0.8L5 5.2L9.2 0.8" fill="none" stroke="#4b4856" stroke-width="1.7"/></svg>
<svg style="position:absolute;left:84.7px;top:603.1999999999999px;" width="18.2" height="18.2" viewBox="-9.1 -9.1 18.2 18.2"><circle r="9.1" fill="#47444f"/><circle r="3.300" fill="#fff"/><path d="M2.95 -0.54L9.08 -3.11" stroke="#fff" stroke-width="0.900"/><path d="M2.95 0.54L9.08 3.11" stroke="#fff" stroke-width="0.900"/><path d="M0.54 2.95L3.11 9.08" stroke="#fff" stroke-width="0.900"/><path d="M-0.54 2.95L-3.11 9.08" stroke="#fff" stroke-width="0.900"/><path d="M-2.95 0.54L-9.08 3.11" stroke="#fff" stroke-width="0.900"/><path d="M-2.95 -0.54L-9.08 -3.11" stroke="#fff" stroke-width="0.900"/><path d="M-0.54 -2.95L-3.11 -9.08" stroke="#fff" stroke-width="0.900"/><path d="M0.54 -2.95L3.11 -9.08" stroke="#fff" stroke-width="0.900"/></svg>
<span style="position:absolute;white-space:nowrap;left:108.4px;top:602.5px;line-height:20px;font-size:14px;color:#514e5c;font-weight:normal;letter-spacing:-0.46px;">Fiches PSD</span>
<svg style="position:absolute;left:89px;top:637.0px;" width="7" height="10" viewBox="0 0 7 10"><path d="M0.8 0.8L5.4 5L0.8 9.2" fill="none" stroke="#4b4856" stroke-width="1.7"/></svg>
<svg style="position:absolute;left:109.7px;top:633.1999999999999px;" width="18.2" height="18.2" viewBox="-9.1 -9.1 18.2 18.2"><circle r="9.1" fill="#47444f"/><circle r="3.300" fill="#fff"/><path d="M2.95 -0.54L9.08 -3.11" stroke="#fff" stroke-width="0.900"/><path d="M2.95 0.54L9.08 3.11" stroke="#fff" stroke-width="0.900"/><path d="M0.54 2.95L3.11 9.08" stroke="#fff" stroke-width="0.900"/><path d="M-0.54 2.95L-3.11 9.08" stroke="#fff" stroke-width="0.900"/><path d="M-2.95 0.54L-9.08 3.11" stroke="#fff" stroke-width="0.900"/><path d="M-2.95 -0.54L-9.08 -3.11" stroke="#fff" stroke-width="0.900"/><path d="M-0.54 -2.95L-3.11 -9.08" stroke="#fff" stroke-width="0.900"/><path d="M0.54 -2.95L3.11 -9.08" stroke="#fff" stroke-width="0.900"/></svg>
<span style="position:absolute;white-space:nowrap;left:133.4px;top:632.5px;line-height:20px;font-size:14px;color:#514e5c;font-weight:normal;letter-spacing:0.3px;">Procédures par Catégorie</span>
<svg style="position:absolute;left:109.7px;top:663.1999999999999px;" width="18.2" height="18.2" viewBox="-9.1 -9.1 18.2 18.2"><circle r="9.1" fill="#47444f"/><circle r="3.300" fill="#fff"/><path d="M2.95 -0.54L9.08 -3.11" stroke="#fff" stroke-width="0.900"/><path d="M2.95 0.54L9.08 3.11" stroke="#fff" stroke-width="0.900"/><path d="M0.54 2.95L3.11 9.08" stroke="#fff" stroke-width="0.900"/><path d="M-0.54 2.95L-3.11 9.08" stroke="#fff" stroke-width="0.900"/><path d="M-2.95 0.54L-9.08 3.11" stroke="#fff" stroke-width="0.900"/><path d="M-2.95 -0.54L-9.08 -3.11" stroke="#fff" stroke-width="0.900"/><path d="M-0.54 -2.95L-3.11 -9.08" stroke="#fff" stroke-width="0.900"/><path d="M0.54 -2.95L3.11 -9.08" stroke="#fff" stroke-width="0.900"/></svg>
<span style="position:absolute;white-space:nowrap;left:133.4px;top:662.5px;line-height:20px;font-size:14px;color:#514e5c;font-weight:normal;letter-spacing:0.29px;">Procédures toutes catégories</span>
<svg style="position:absolute;left:110.0px;top:693.8px;" width="17.6" height="17" viewBox="0 0 17.6 17"><path d="M8.6 0C3.6 0 0 3.9 0 8.5S3.7 17 8.4 17c1.6 0 2.6-1.3 2.1-2.7-.6-1.6.4-3.3 2.2-3.3h2.5c1.4 0 2.4-1 2.4-2.5C17.5 3.600 13.6 0 8.600 0z" fill="#47444f"/><circle cx="3.4" cy="8.600" r="1.25" fill="#fff"/><circle cx="5.2" cy="4.5" r="1.25" fill="#fff"/><circle cx="9.6" cy="3.2" r="1.25" fill="#fff"/><circle cx="13.5" cy="5.4" r="1.25" fill="#fff"/></svg>
<span style="position:absolute;white-space:nowrap;left:133.4px;top:692.5px;line-height:20px;font-size:14px;color:#514e5c;font-weight:normal;letter-spacing:0.14px;">Ergonomies FMO</span>
<svg style="position:absolute;left:87.5px;top:729.0px;" width="10" height="6.5" viewBox="0 0 10 6.5"><path d="M0.8 0.8L5 5.2L9.2 0.8" fill="none" stroke="#4b4856" stroke-width="1.7"/></svg>
<svg style="position:absolute;left:110.2px;top:723.6999999999999px;" width="17.20" height="17.20" viewBox="0.0 -1408.0 1536.0 1536.0" preserveAspectRatio="none"><path transform="scale(1,-1)" fill="#47444f" d="M896 160V352Q896 366 887.0 375.0Q878 384 864 384H672Q658 384 649.0 375.0Q640 366 640 352V160Q640 146 649.0 137.0Q658 128 672 128H864Q878 128 887.0 137.0Q896 146 896 160ZM1152 832Q1152 920 1096.5 995.0Q1041 1070 958.0 1111.0Q875 1152 788 1152Q545 1152 417 939Q402 915 425 897L557 797Q564 791 576 791Q592 791 601 803Q654 871 687 895Q721 919 773 919Q821 919 858.5 893.0Q896 867 896 834Q896 796 876.0 773.0Q856 750 808 728Q745 700 692.5 641.5Q640 583 640 516V480Q640 466 649.0 457.0Q658 448 672 448H864Q878 448 887.0 457.0Q896 466 896 480Q896 499 917.5 529.5Q939 560 972 579Q1004 597 1021.0 607.5Q1038 618 1067.0 642.5Q1096 667 1111.5 690.5Q1127 714 1139.5 751.0Q1152 788 1152 832ZM1433.0 1025.5Q1536 849 1536.0 640.0Q1536 431 1433.0 254.5Q1330 78 1153.5 -25.0Q977 -128 768.0 -128.0Q559 -128 382.5 -25.0Q206 78 103.0 254.5Q0 431 0.0 640.0Q0 849 103.0 1025.5Q206 1202 382.5 1305.0Q559 1408 768.0 1408.0Q977 1408 1153.5 1305.0Q1330 1202 1433.0 1025.5Z"/></svg>
<span style="position:absolute;white-space:nowrap;left:133.4px;top:722.5px;line-height:20px;font-size:14px;color:#514e5c;font-weight:normal;letter-spacing:0.42px;">Questionnaires</span>
<svg style="position:absolute;left:135.20000000000002px;top:753.6999999999999px;" width="17.20" height="17.20" viewBox="0.0 -1408.0 1536.0 1536.0" preserveAspectRatio="none"><path transform="scale(1,-1)" fill="#47444f" d="M896 160V352Q896 366 887.0 375.0Q878 384 864 384H672Q658 384 649.0 375.0Q640 366 640 352V160Q640 146 649.0 137.0Q658 128 672 128H864Q878 128 887.0 137.0Q896 146 896 160ZM1152 832Q1152 920 1096.5 995.0Q1041 1070 958.0 1111.0Q875 1152 788 1152Q545 1152 417 939Q402 915 425 897L557 797Q564 791 576 791Q592 791 601 803Q654 871 687 895Q721 919 773 919Q821 919 858.5 893.0Q896 867 896 834Q896 796 876.0 773.0Q856 750 808 728Q745 700 692.5 641.5Q640 583 640 516V480Q640 466 649.0 457.0Q658 448 672 448H864Q878 448 887.0 457.0Q896 466 896 480Q896 499 917.5 529.5Q939 560 972 579Q1004 597 1021.0 607.5Q1038 618 1067.0 642.5Q1096 667 1111.5 690.5Q1127 714 1139.5 751.0Q1152 788 1152 832ZM1433.0 1025.5Q1536 849 1536.0 640.0Q1536 431 1433.0 254.5Q1330 78 1153.5 -25.0Q977 -128 768.0 -128.0Q559 -128 382.5 -25.0Q206 78 103.0 254.5Q0 431 0.0 640.0Q0 849 103.0 1025.5Q206 1202 382.5 1305.0Q559 1408 768.0 1408.0Q977 1408 1153.5 1305.0Q1330 1202 1433.0 1025.5Z"/></svg>
<span style="position:absolute;white-space:nowrap;left:158.4px;top:752.5px;line-height:20px;font-size:14px;color:#514e5c;font-weight:normal;letter-spacing:0.42px;">Questionnaires</span>
<div style="position:absolute;left:459.5px;top:240px;width:16.5px;height:540px;background:#fff;"></div>
<div style="position:absolute;left:461.5px;top:257px;width:14.3px;height:523px;background:#dbe4ee;"></div>
<svg style="position:absolute;left:463px;top:246px;" width="10" height="6" viewBox="0 0 10 6"><path d="M0 6h10l-5-6z" fill="#222"/></svg>
<svg style="position:absolute;left:480px;top:576px;" width="4" height="26" viewBox="0 0 4 26"><path d="M0.600 4.2L3 1.8" stroke="#4f86e0" stroke-width="1.100"/><path d="M0.600 9.2L3 6.8" stroke="#4f86e0" stroke-width="1.100"/><path d="M0.600 14.2L3 11.8" stroke="#4f86e0" stroke-width="1.100"/><path d="M0.600 19.2L3 16.8" stroke="#4f86e0" stroke-width="1.100"/><path d="M0.600 24.2L3 21.8" stroke="#4f86e0" stroke-width="1.100"/></svg>
<div style="position:absolute;left:0px;top:0px;width:2.2px;height:780px;background:#1d1d1f;"></div>
<div style="position:absolute;left:484px;top:185px;width:847px;height:595px;background:#f0f0f0;"></div>
<div style="position:absolute;left:484px;top:185px;width:847px;height:28.5px;background:linear-gradient(#ffe9b6 0%,#ffd38c 18%,#ffbd68 50%,#fba548 85%,#f89c3c 100%);"></div>
<div style="position:absolute;left:484px;top:213.5px;width:847px;height:28.5px;background:#fff;"></div>
<div style="position:absolute;left:484px;top:241px;width:847px;height:2px;background:#adc8f3;"></div>
<div style="position:absolute;left:484px;top:243px;width:847px;height:3px;background:linear-gradient(#e4e8ee,#f0f0f0);"></div>
<div style="position:absolute;left:484px;top:185px;width:1px;height:595px;background:#a9c4ea;"></div>
<svg style="position:absolute;left:491.7px;top:190.2px;" width="19.6" height="19.6" viewBox="-10 -10 20 20"><defs><radialGradient id="qg501" cx="40%" cy="30%" r="75%"><stop offset="0" stop-color="#5a8fe0"/><stop offset="0.55" stop-color="#2a5cc0"/><stop offset="1" stop-color="#173c93"/></radialGradient></defs><circle r="9.6" fill="url(#qg501)" stroke="#c9d6ee" stroke-width="0.8"/><text x="0" y="5.6" text-anchor="middle" font-family="Liberation Sans,sans-serif" font-weight="bold" font-size="15.5" fill="#fff">?</text></svg>
<span style="position:absolute;white-space:nowrap;left:516.5px;top:189.5px;line-height:20px;font-size:14.6px;color:#1f3768;font-weight:normal;letter-spacing:-0.01px;">Questionnaires</span>
<svg style="position:absolute;left:497.5px;top:218.5px;" width="21.5" height="20.5" viewBox="0 0 21.5 20.5"><path d="M7.5 3.2V1.2h7.5v2" fill="none" stroke="#2a3140" stroke-width="1.6"/><path d="M1 5.2L18.5 3.2L20.500 5V17l-2 2.500L1 18.500z" fill="#3b475c"/><path d="M1 5.2L18.5 3.2L20.500 5L3.500 7z" fill="#5f7190"/><path d="M18.500 3.200L20.500 5V17l-2 2.500z" fill="#232b3a"/><rect x="4.500" y="9" width="2.600" height="4" fill="#8c9ab4"/><rect x="12.500" y="8.400" width="2.600" height="4" fill="#8c9ab4"/></svg>
<span style="position:absolute;white-space:nowrap;left:522.7px;top:217.5px;line-height:20px;font-size:14.6px;color:#2c50a0;font-weight:normal;letter-spacing:0.0px;">Gestion Commerciale ...</span>
<div style="position:absolute;left:692px;top:216px;width:133.5px;height:27px;box-sizing:border-box;border:1.3px solid #a3c1ee;border-bottom:none;border-radius:5px 5px 0 0;background:linear-gradient(#fbfdff,#e9f1fc 60%,#dde9fa)"></div>
<svg style="position:absolute;left:698.6px;top:219.0px;" width="18.8" height="18.8" viewBox="-10 -10 20 20"><defs><radialGradient id="qg708" cx="40%" cy="30%" r="75%"><stop offset="0" stop-color="#5a8fe0"/><stop offset="0.55" stop-color="#2a5cc0"/><stop offset="1" stop-color="#173c93"/></radialGradient></defs><circle r="9.6" fill="url(#qg708)" stroke="#c9d6ee" stroke-width="0.8"/><text x="0" y="5.6" text-anchor="middle" font-family="Liberation Sans,sans-serif" font-weight="bold" font-size="15.5" fill="#fff">?</text></svg>
<span style="position:absolute;white-space:nowrap;left:722px;top:217.5px;line-height:20px;font-size:14.6px;color:#2c50a0;font-weight:normal;letter-spacing:0.04px;">Questionnaires</span>
<div style="position:absolute;left:485.5px;top:249px;width:726.5px;height:531px;background:#fff;"></div>
<div style="position:absolute;left:526.5px;top:272px;width:664.5px;height:20px;background:#efefef;"></div>
<div style="position:absolute;left:486px;top:272px;width:40.5px;height:20px;background:#ffc57a;"></div>
<div style="position:absolute;left:486px;top:291px;width:40.5px;height:1.4px;background:#a5bcdc;"></div>
<div style="position:absolute;left:527px;top:291.00px;width:664px;height:0;border-top:1.2px dotted #c2c2c2"></div>
<span style="position:absolute;white-space:nowrap;left:529.5px;top:271.80px;line-height:20px;font-size:15.4px;color:#000;font-weight:normal;-webkit-text-stroke:0.15px #000;transform:scaleX(0.86);transform-origin:0 50%;">IKMArt</span>
<span style="position:absolute;white-space:nowrap;left:620.8px;top:271.80px;line-height:20px;font-size:15.4px;color:#000;font-weight:normal;-webkit-text-stroke:0.15px #000;transform:scaleX(0.86);transform-origin:0 50%;">Saisie Article</span>
<svg style="position:absolute;left:890.7px;top:274.25px;" width="16" height="15.5" viewBox="0 0 16 15.500"><rect x="0.75" y="0.75" width="14.500" height="14" fill="#fff" stroke="#3c3c3c" stroke-width="1.5"/><path d="M3.2 7.200L6.700 11L13 3.800" fill="none" stroke="#555" stroke-width="1.5"/></svg>
<svg style="position:absolute;left:932px;top:274.25px;" width="16" height="15.5" viewBox="0 0 16 15.500"><rect x="0.75" y="0.75" width="14.500" height="14" fill="#fff" stroke="#3c3c3c" stroke-width="1.5"/><path d="M3.2 7.200L6.700 11L13 3.800" fill="none" stroke="#555" stroke-width="1.5"/></svg>
<svg style="position:absolute;left:973.4px;top:274.25px;" width="16" height="15.5" viewBox="0 0 16 15.500"><rect x="0.75" y="0.75" width="14.500" height="14" fill="#fff" stroke="#3c3c3c" stroke-width="1.5"/></svg>
<span style="position:absolute;white-space:nowrap;left:1137px;top:271.80px;line-height:20px;font-size:15.4px;color:#000;font-weight:normal;-webkit-text-stroke:0.15px #000;width:62.21px;overflow:hidden;transform:scaleX(0.86);transform-origin:0 50%;">Séquenti</span>
<div style="position:absolute;left:526.5px;top:292px;width:664.5px;height:20px;background:#fff;"></div>
<div style="position:absolute;left:486px;top:292px;width:40.5px;height:20px;background:#e3ebf7;"></div>
<div style="position:absolute;left:486px;top:311px;width:40.5px;height:1.4px;background:#a5bcdc;"></div>
<div style="position:absolute;left:527px;top:311.00px;width:664px;height:0;border-top:1.2px dotted #c2c2c2"></div>
<span style="position:absolute;white-space:nowrap;left:529.5px;top:291.80px;line-height:20px;font-size:15.4px;color:#000;font-weight:normal;-webkit-text-stroke:0.15px #000;transform:scaleX(0.86);transform-origin:0 50%;">IKMArtDoc</span>
<span style="position:absolute;white-space:nowrap;left:620.8px;top:291.80px;line-height:20px;font-size:15.4px;color:#000;font-weight:normal;-webkit-text-stroke:0.15px #000;transform:scaleX(0.86);transform-origin:0 50%;">Saisie Article / Doc</span>
<svg style="position:absolute;left:932px;top:294.25px;" width="16" height="15.5" viewBox="0 0 16 15.500"><rect x="0.75" y="0.75" width="14.500" height="14" fill="#fff" stroke="#3c3c3c" stroke-width="1.5"/><path d="M3.2 7.200L6.700 11L13 3.800" fill="none" stroke="#555" stroke-width="1.5"/></svg>
<svg style="position:absolute;left:973.4px;top:294.25px;" width="16" height="15.5" viewBox="0 0 16 15.500"><rect x="0.75" y="0.75" width="14.500" height="14" fill="#fff" stroke="#3c3c3c" stroke-width="1.5"/></svg>
<span style="position:absolute;white-space:nowrap;left:1137px;top:291.80px;line-height:20px;font-size:15.4px;color:#000;font-weight:normal;-webkit-text-stroke:0.15px #000;width:62.21px;overflow:hidden;transform:scaleX(0.86);transform-origin:0 50%;">Séquenti</span>
<div style="position:absolute;left:526.5px;top:312px;width:664.5px;height:20px;background:#efefef;"></div>
<div style="position:absolute;left:486px;top:312px;width:40.5px;height:20px;background:#e3ebf7;"></div>
<div style="position:absolute;left:486px;top:331px;width:40.5px;height:1.4px;background:#a5bcdc;"></div>
<div style="position:absolute;left:527px;top:331.00px;width:664px;height:0;border-top:1.2px dotted #c2c2c2"></div>
<span style="position:absolute;white-space:nowrap;left:529.5px;top:311.80px;line-height:20px;font-size:15.4px;color:#000;font-weight:normal;-webkit-text-stroke:0.15px #000;transform:scaleX(0.86);transform-origin:0 50%;">IKMInvTou</span>
<span style="position:absolute;white-space:nowrap;left:620.8px;top:311.80px;line-height:20px;font-size:15.4px;color:#000;font-weight:normal;-webkit-text-stroke:0.15px #000;transform:scaleX(0.86);transform-origin:0 50%;">Inventaire Tournant</span>
<svg style="position:absolute;left:932px;top:314.25px;" width="16" height="15.5" viewBox="0 0 16 15.500"><rect x="0.75" y="0.75" width="14.500" height="14" fill="#fff" stroke="#3c3c3c" stroke-width="1.5"/></svg>
<svg style="position:absolute;left:973.4px;top:314.25px;" width="16" height="15.5" viewBox="0 0 16 15.500"><rect x="0.75" y="0.75" width="14.500" height="14" fill="#fff" stroke="#3c3c3c" stroke-width="1.5"/></svg>
<span style="position:absolute;white-space:nowrap;left:1137px;top:311.80px;line-height:20px;font-size:15.4px;color:#000;font-weight:normal;-webkit-text-stroke:0.15px #000;width:62.21px;overflow:hidden;transform:scaleX(0.86);transform-origin:0 50%;">Séquenti</span>
<div style="position:absolute;left:526.5px;top:332px;width:664.5px;height:20px;background:#fff;"></div>
<div style="position:absolute;left:486px;top:332px;width:40.5px;height:20px;background:#e3ebf7;"></div>
<div style="position:absolute;left:486px;top:351px;width:40.5px;height:1.4px;background:#a5bcdc;"></div>
<div style="position:absolute;left:527px;top:351.00px;width:664px;height:0;border-top:1.2px dotted #c2c2c2"></div>
<span style="position:absolute;white-space:nowrap;left:529.5px;top:331.80px;line-height:20px;font-size:15.4px;color:#000;font-weight:normal;-webkit-text-stroke:0.15px #000;transform:scaleX(0.86);transform-origin:0 50%;">IKMPsdRo</span>
<span style="position:absolute;white-space:nowrap;left:620.8px;top:331.80px;line-height:20px;font-size:15.4px;color:#000;font-weight:normal;-webkit-text-stroke:0.15px #000;transform:scaleX(0.86);transform-origin:0 50%;">Psd Routage</span>
<svg style="position:absolute;left:932px;top:334.25px;" width="16" height="15.5" viewBox="0 0 16 15.500"><rect x="0.75" y="0.75" width="14.500" height="14" fill="#fff" stroke="#3c3c3c" stroke-width="1.5"/><path d="M3.2 7.200L6.700 11L13 3.800" fill="none" stroke="#555" stroke-width="1.5"/></svg>
<svg style="position:absolute;left:973.4px;top:334.25px;" width="16" height="15.5" viewBox="0 0 16 15.500"><rect x="0.75" y="0.75" width="14.500" height="14" fill="#fff" stroke="#3c3c3c" stroke-width="1.5"/></svg>
<span style="position:absolute;white-space:nowrap;left:1005.3px;top:331.80px;line-height:20px;font-size:15.4px;color:#000;font-weight:normal;-webkit-text-stroke:0.15px #000;transform:scaleX(0.86);transform-origin:0 50%;">KM</span>
<span style="position:absolute;white-space:nowrap;left:1137px;top:331.80px;line-height:20px;font-size:15.4px;color:#000;font-weight:normal;-webkit-text-stroke:0.15px #000;width:62.21px;overflow:hidden;transform:scaleX(0.86);transform-origin:0 50%;">Séquenti</span>
<div style="position:absolute;left:526.5px;top:352px;width:664.5px;height:20px;background:#efefef;"></div>
<div style="position:absolute;left:486px;top:352px;width:40.5px;height:20px;background:#e3ebf7;"></div>
<div style="position:absolute;left:486px;top:371px;width:40.5px;height:1.4px;background:#a5bcdc;"></div>
<div style="position:absolute;left:527px;top:371.00px;width:664px;height:0;border-top:1.2px dotted #c2c2c2"></div>
<span style="position:absolute;white-space:nowrap;left:529.5px;top:351.80px;line-height:20px;font-size:15.4px;color:#000;font-weight:normal;-webkit-text-stroke:0.15px #000;transform:scaleX(0.86);transform-origin:0 50%;">IKM_Test7</span>
<span style="position:absolute;white-space:nowrap;left:620.8px;top:351.80px;line-height:20px;font-size:15.4px;color:#000;font-weight:normal;-webkit-text-stroke:0.15px #000;transform:scaleX(0.86);transform-origin:0 50%;">Test</span>
<svg style="position:absolute;left:932px;top:354.25px;" width="16" height="15.5" viewBox="0 0 16 15.500"><rect x="0.75" y="0.75" width="14.500" height="14" fill="#fff" stroke="#3c3c3c" stroke-width="1.5"/></svg>
<svg style="position:absolute;left:973.4px;top:354.25px;" width="16" height="15.5" viewBox="0 0 16 15.500"><rect x="0.75" y="0.75" width="14.500" height="14" fill="#fff" stroke="#3c3c3c" stroke-width="1.5"/></svg>
<span style="position:absolute;white-space:nowrap;left:1005.3px;top:351.80px;line-height:20px;font-size:15.4px;color:#000;font-weight:normal;-webkit-text-stroke:0.15px #000;transform:scaleX(0.86);transform-origin:0 50%;">IKM</span>
<span style="position:absolute;white-space:nowrap;left:1137px;top:351.80px;line-height:20px;font-size:15.4px;color:#000;font-weight:normal;-webkit-text-stroke:0.15px #000;width:62.21px;overflow:hidden;transform:scaleX(0.86);transform-origin:0 50%;">Séquenti</span>
<div style="position:absolute;left:526.5px;top:372px;width:664.5px;height:20px;background:#fff;"></div>
<div style="position:absolute;left:486px;top:372px;width:40.5px;height:20px;background:#e3ebf7;"></div>
<div style="position:absolute;left:486px;top:391px;width:40.5px;height:1.4px;background:#a5bcdc;"></div>
<div style="position:absolute;left:527px;top:391.00px;width:664px;height:0;border-top:1.2px dotted #c2c2c2"></div>
<span style="position:absolute;white-space:nowrap;left:529.5px;top:371.80px;line-height:20px;font-size:15.4px;color:#000;font-weight:normal;-webkit-text-stroke:0.15px #000;transform:scaleX(0.86);transform-origin:0 50%;">IMDCDefM</span>
<span style="position:absolute;white-space:nowrap;left:620.8px;top:371.80px;line-height:20px;font-size:15.4px;color:#000;font-weight:normal;-webkit-text-stroke:0.15px #000;transform:scaleX(0.86);transform-origin:0 50%;">Définition Menuiserie</span>
<svg style="position:absolute;left:932px;top:374.25px;" width="16" height="15.5" viewBox="0 0 16 15.500"><rect x="0.75" y="0.75" width="14.500" height="14" fill="#fff" stroke="#3c3c3c" stroke-width="1.5"/><path d="M3.2 7.200L6.700 11L13 3.800" fill="none" stroke="#555" stroke-width="1.5"/></svg>
<svg style="position:absolute;left:973.4px;top:374.25px;" width="16" height="15.5" viewBox="0 0 16 15.500"><rect x="0.75" y="0.75" width="14.500" height="14" fill="#fff" stroke="#3c3c3c" stroke-width="1.5"/></svg>
<span style="position:absolute;white-space:nowrap;left:1005.3px;top:371.80px;line-height:20px;font-size:15.4px;color:#000;font-weight:normal;-webkit-text-stroke:0.15px #000;transform:scaleX(0.86);transform-origin:0 50%;">ISIA</span>
<span style="position:absolute;white-space:nowrap;left:1137px;top:371.80px;line-height:20px;font-size:15.4px;color:#000;font-weight:normal;-webkit-text-stroke:0.15px #000;width:62.21px;overflow:hidden;transform:scaleX(0.86);transform-origin:0 50%;">Libre</span>
<div style="position:absolute;left:526.5px;top:392px;width:664.5px;height:20px;background:#efefef;"></div>
<div style="position:absolute;left:486px;top:392px;width:40.5px;height:20px;background:#e3ebf7;"></div>
<div style="position:absolute;left:486px;top:411px;width:40.5px;height:1.4px;background:#a5bcdc;"></div>
<div style="position:absolute;left:527px;top:411.00px;width:664px;height:0;border-top:1.2px dotted #c2c2c2"></div>
<span style="position:absolute;white-space:nowrap;left:529.5px;top:391.80px;line-height:20px;font-size:15.4px;color:#000;font-weight:normal;-webkit-text-stroke:0.15px #000;transform:scaleX(0.86);transform-origin:0 50%;">IMDDefMo</span>
<span style="position:absolute;white-space:nowrap;left:620.8px;top:391.80px;line-height:20px;font-size:15.4px;color:#000;font-weight:normal;-webkit-text-stroke:0.15px #000;transform:scaleX(0.86);transform-origin:0 50%;">Définition Modèle</span>
<svg style="position:absolute;left:932px;top:394.25px;" width="16" height="15.5" viewBox="0 0 16 15.500"><rect x="0.75" y="0.75" width="14.500" height="14" fill="#fff" stroke="#3c3c3c" stroke-width="1.5"/><path d="M3.2 7.200L6.700 11L13 3.800" fill="none" stroke="#555" stroke-width="1.5"/></svg>
<svg style="position:absolute;left:973.4px;top:394.25px;" width="16" height="15.5" viewBox="0 0 16 15.500"><rect x="0.75" y="0.75" width="14.500" height="14" fill="#fff" stroke="#3c3c3c" stroke-width="1.5"/></svg>
<span style="position:absolute;white-space:nowrap;left:1005.3px;top:391.80px;line-height:20px;font-size:15.4px;color:#000;font-weight:normal;-webkit-text-stroke:0.15px #000;transform:scaleX(0.86);transform-origin:0 50%;">ISIA</span>
<span style="position:absolute;white-space:nowrap;left:1137px;top:391.80px;line-height:20px;font-size:15.4px;color:#000;font-weight:normal;-webkit-text-stroke:0.15px #000;width:62.21px;overflow:hidden;transform:scaleX(0.86);transform-origin:0 50%;">Libre</span>
<div style="position:absolute;left:526.5px;top:412px;width:664.5px;height:20px;background:#fff;"></div>
<div style="position:absolute;left:486px;top:412px;width:40.5px;height:20px;background:#e3ebf7;"></div>
<div style="position:absolute;left:486px;top:431px;width:40.5px;height:1.4px;background:#a5bcdc;"></div>
<div style="position:absolute;left:527px;top:431.00px;width:664px;height:0;border-top:1.2px dotted #c2c2c2"></div>
<span style="position:absolute;white-space:nowrap;left:529.5px;top:411.80px;line-height:20px;font-size:15.4px;color:#000;font-weight:normal;-webkit-text-stroke:0.15px #000;transform:scaleX(0.86);transform-origin:0 50%;">IMDDefMo</span>
<span style="position:absolute;white-space:nowrap;left:620.8px;top:411.80px;line-height:20px;font-size:15.4px;color:#000;font-weight:normal;-webkit-text-stroke:0.15px #000;transform:scaleX(0.86);transform-origin:0 50%;">Définition Modèle</span>
<svg style="position:absolute;left:932px;top:414.25px;" width="16" height="15.5" viewBox="0 0 16 15.500"><rect x="0.75" y="0.75" width="14.500" height="14" fill="#fff" stroke="#3c3c3c" stroke-width="1.5"/></svg>
<svg style="position:absolute;left:973.4px;top:414.25px;" width="16" height="15.5" viewBox="0 0 16 15.500"><rect x="0.75" y="0.75" width="14.500" height="14" fill="#fff" stroke="#3c3c3c" stroke-width="1.5"/></svg>
<span style="position:absolute;white-space:nowrap;left:1005.3px;top:411.80px;line-height:20px;font-size:15.4px;color:#000;font-weight:normal;-webkit-text-stroke:0.15px #000;transform:scaleX(0.86);transform-origin:0 50%;">ISIA</span>
<span style="position:absolute;white-space:nowrap;left:1137px;top:411.80px;line-height:20px;font-size:15.4px;color:#000;font-weight:normal;-webkit-text-stroke:0.15px #000;width:62.21px;overflow:hidden;transform:scaleX(0.86);transform-origin:0 50%;">Libre</span>
<div style="position:absolute;left:526.5px;top:432px;width:664.5px;height:20px;background:#efefef;"></div>
<div style="position:absolute;left:486px;top:432px;width:40.5px;height:20px;background:#e3ebf7;"></div>
<div style="position:absolute;left:486px;top:451px;width:40.5px;height:1.4px;background:#a5bcdc;"></div>
<div style="position:absolute;left:527px;top:451.00px;width:664px;height:0;border-top:1.2px dotted #c2c2c2"></div>
<span style="position:absolute;white-space:nowrap;left:529.5px;top:431.80px;line-height:20px;font-size:15.4px;color:#000;font-weight:normal;-webkit-text-stroke:0.15px #000;transform:scaleX(0.86);transform-origin:0 50%;">IMdDetFer</span>
<span style="position:absolute;white-space:nowrap;left:620.8px;top:431.80px;line-height:20px;font-size:15.4px;color:#000;font-weight:normal;-webkit-text-stroke:0.15px #000;transform:scaleX(0.86);transform-origin:0 50%;">Détail Ferrage</span>
<svg style="position:absolute;left:932px;top:434.25px;" width="16" height="15.5" viewBox="0 0 16 15.500"><rect x="0.75" y="0.75" width="14.500" height="14" fill="#fff" stroke="#3c3c3c" stroke-width="1.5"/><path d="M3.2 7.200L6.700 11L13 3.800" fill="none" stroke="#555" stroke-width="1.5"/></svg>
<svg style="position:absolute;left:973.4px;top:434.25px;" width="16" height="15.5" viewBox="0 0 16 15.500"><rect x="0.75" y="0.75" width="14.500" height="14" fill="#fff" stroke="#3c3c3c" stroke-width="1.5"/></svg>
<span style="position:absolute;white-space:nowrap;left:1005.3px;top:431.80px;line-height:20px;font-size:15.4px;color:#000;font-weight:normal;-webkit-text-stroke:0.15px #000;transform:scaleX(0.86);transform-origin:0 50%;">ISIA</span>
<span style="position:absolute;white-space:nowrap;left:1137px;top:431.80px;line-height:20px;font-size:15.4px;color:#000;font-weight:normal;-webkit-text-stroke:0.15px #000;width:62.21px;overflow:hidden;transform:scaleX(0.86);transform-origin:0 50%;">Séquenti</span>
<div style="position:absolute;left:526.5px;top:452px;width:664.5px;height:20px;background:#fff;"></div>
<div style="position:absolute;left:486px;top:452px;width:40.5px;height:20px;background:#e3ebf7;"></div>
<div style="position:absolute;left:486px;top:471px;width:40.5px;height:1.4px;background:#a5bcdc;"></div>
<div style="position:absolute;left:527px;top:471.00px;width:664px;height:0;border-top:1.2px dotted #c2c2c2"></div>
<span style="position:absolute;white-space:nowrap;left:529.5px;top:451.80px;line-height:20px;font-size:15.4px;color:#000;font-weight:normal;-webkit-text-stroke:0.15px #000;transform:scaleX(0.86);transform-origin:0 50%;">IMdDetOu</span>
<span style="position:absolute;white-space:nowrap;left:620.8px;top:451.80px;line-height:20px;font-size:15.4px;color:#000;font-weight:normal;-webkit-text-stroke:0.15px #000;transform:scaleX(0.86);transform-origin:0 50%;">Détail Ouvrant</span>
<svg style="position:absolute;left:932px;top:454.25px;" width="16" height="15.5" viewBox="0 0 16 15.500"><rect x="0.75" y="0.75" width="14.500" height="14" fill="#fff" stroke="#3c3c3c" stroke-width="1.5"/><path d="M3.2 7.200L6.700 11L13 3.800" fill="none" stroke="#555" stroke-width="1.5"/></svg>
<svg style="position:absolute;left:973.4px;top:454.25px;" width="16" height="15.5" viewBox="0 0 16 15.500"><rect x="0.75" y="0.75" width="14.500" height="14" fill="#fff" stroke="#3c3c3c" stroke-width="1.5"/></svg>
<span style="position:absolute;white-space:nowrap;left:1005.3px;top:451.80px;line-height:20px;font-size:15.4px;color:#000;font-weight:normal;-webkit-text-stroke:0.15px #000;transform:scaleX(0.86);transform-origin:0 50%;">ISIA</span>
<span style="position:absolute;white-space:nowrap;left:1137px;top:451.80px;line-height:20px;font-size:15.4px;color:#000;font-weight:normal;-webkit-text-stroke:0.15px #000;width:62.21px;overflow:hidden;transform:scaleX(0.86);transform-origin:0 50%;">Séquenti</span>
<div style="position:absolute;left:526.5px;top:472px;width:664.5px;height:20px;background:#efefef;"></div>
<div style="position:absolute;left:486px;top:472px;width:40.5px;height:20px;background:#e3ebf7;"></div>
<div style="position:absolute;left:486px;top:491px;width:40.5px;height:1.4px;background:#a5bcdc;"></div>
<div style="position:absolute;left:527px;top:491.00px;width:664px;height:0;border-top:1.2px dotted #c2c2c2"></div>
<span style="position:absolute;white-space:nowrap;left:529.5px;top:471.80px;line-height:20px;font-size:15.4px;color:#000;font-weight:normal;-webkit-text-stroke:0.15px #000;transform:scaleX(0.86);transform-origin:0 50%;">IMDDTCD</span>
<span style="position:absolute;white-space:nowrap;left:620.8px;top:471.80px;line-height:20px;font-size:15.4px;color:#000;font-weight:normal;-webkit-text-stroke:0.15px #000;transform:scaleX(0.86);transform-origin:0 50%;">Données Techniques</span>
<svg style="position:absolute;left:932px;top:474.25px;" width="16" height="15.5" viewBox="0 0 16 15.500"><rect x="0.75" y="0.75" width="14.500" height="14" fill="#fff" stroke="#3c3c3c" stroke-width="1.5"/><path d="M3.2 7.200L6.700 11L13 3.800" fill="none" stroke="#555" stroke-width="1.5"/></svg>
<svg style="position:absolute;left:973.4px;top:474.25px;" width="16" height="15.5" viewBox="0 0 16 15.500"><rect x="0.75" y="0.75" width="14.500" height="14" fill="#fff" stroke="#3c3c3c" stroke-width="1.5"/><path d="M3.2 7.200L6.700 11L13 3.800" fill="none" stroke="#555" stroke-width="1.5"/></svg>
<span style="position:absolute;white-space:nowrap;left:1005.3px;top:471.80px;line-height:20px;font-size:15.4px;color:#000;font-weight:normal;-webkit-text-stroke:0.15px #000;transform:scaleX(0.86);transform-origin:0 50%;">ISIA</span>
<span style="position:absolute;white-space:nowrap;left:1137px;top:471.80px;line-height:20px;font-size:15.4px;color:#000;font-weight:normal;-webkit-text-stroke:0.15px #000;width:62.21px;overflow:hidden;transform:scaleX(0.86);transform-origin:0 50%;">Séquenti</span>
<div style="position:absolute;left:526.5px;top:492px;width:664.5px;height:20px;background:#fff;"></div>
<div style="position:absolute;left:486px;top:492px;width:40.5px;height:20px;background:#e3ebf7;"></div>
<div style="position:absolute;left:486px;top:511px;width:40.5px;height:1.4px;background:#a5bcdc;"></div>
<div style="position:absolute;left:527px;top:511.00px;width:664px;height:0;border-top:1.2px dotted #c2c2c2"></div>
<span style="position:absolute;white-space:nowrap;left:529.5px;top:491.80px;line-height:20px;font-size:15.4px;color:#000;font-weight:normal;-webkit-text-stroke:0.15px #000;transform:scaleX(0.86);transform-origin:0 50%;">IMDDTLib</span>
<span style="position:absolute;white-space:nowrap;left:620.8px;top:491.80px;line-height:20px;font-size:15.4px;color:#000;font-weight:normal;-webkit-text-stroke:0.15px #000;transform:scaleX(0.86);transform-origin:0 50%;">Données Techniques Libres</span>
<svg style="position:absolute;left:932px;top:494.25px;" width="16" height="15.5" viewBox="0 0 16 15.500"><rect x="0.75" y="0.75" width="14.500" height="14" fill="#fff" stroke="#3c3c3c" stroke-width="1.5"/><path d="M3.2 7.200L6.700 11L13 3.800" fill="none" stroke="#555" stroke-width="1.5"/></svg>
<svg style="position:absolute;left:973.4px;top:494.25px;" width="16" height="15.5" viewBox="0 0 16 15.500"><rect x="0.75" y="0.75" width="14.500" height="14" fill="#fff" stroke="#3c3c3c" stroke-width="1.5"/><path d="M3.2 7.200L6.700 11L13 3.800" fill="none" stroke="#555" stroke-width="1.5"/></svg>
<span style="position:absolute;white-space:nowrap;left:1005.3px;top:491.80px;line-height:20px;font-size:15.4px;color:#000;font-weight:normal;-webkit-text-stroke:0.15px #000;transform:scaleX(0.86);transform-origin:0 50%;">ISIA</span>
<span style="position:absolute;white-space:nowrap;left:1137px;top:491.80px;line-height:20px;font-size:15.4px;color:#000;font-weight:normal;-webkit-text-stroke:0.15px #000;width:62.21px;overflow:hidden;transform:scaleX(0.86);transform-origin:0 50%;">Séquenti</span>
<div style="position:absolute;left:526.5px;top:512px;width:664.5px;height:20px;background:#efefef;"></div>
<div style="position:absolute;left:486px;top:512px;width:40.5px;height:20px;background:#e3ebf7;"></div>
<div style="position:absolute;left:486px;top:531px;width:40.5px;height:1.4px;background:#a5bcdc;"></div>
<div style="position:absolute;left:527px;top:531.00px;width:664px;height:0;border-top:1.2px dotted #c2c2c2"></div>
<span style="position:absolute;white-space:nowrap;left:529.5px;top:511.80px;line-height:20px;font-size:15.4px;color:#000;font-weight:normal;-webkit-text-stroke:0.15px #000;transform:scaleX(0.86);transform-origin:0 50%;">IMDInter</span>
<span style="position:absolute;white-space:nowrap;left:620.8px;top:511.80px;line-height:20px;font-size:15.4px;color:#000;font-weight:normal;-webkit-text-stroke:0.15px #000;transform:scaleX(0.86);transform-origin:0 50%;">Intercalaires</span>
<svg style="position:absolute;left:932px;top:514.25px;" width="16" height="15.5" viewBox="0 0 16 15.500"><rect x="0.75" y="0.75" width="14.500" height="14" fill="#fff" stroke="#3c3c3c" stroke-width="1.5"/><path d="M3.2 7.200L6.700 11L13 3.800" fill="none" stroke="#555" stroke-width="1.5"/></svg>
<svg style="position:absolute;left:973.4px;top:514.25px;" width="16" height="15.5" viewBox="0 0 16 15.500"><rect x="0.75" y="0.75" width="14.500" height="14" fill="#fff" stroke="#3c3c3c" stroke-width="1.5"/></svg>
<span style="position:absolute;white-space:nowrap;left:1137px;top:511.80px;line-height:20px;font-size:15.4px;color:#000;font-weight:normal;-webkit-text-stroke:0.15px #000;width:62.21px;overflow:hidden;transform:scaleX(0.86);transform-origin:0 50%;">Séquenti</span>
<div style="position:absolute;left:526.5px;top:532px;width:664.5px;height:20px;background:#fff;"></div>
<div style="position:absolute;left:486px;top:532px;width:40.5px;height:20px;background:#e3ebf7;"></div>
<div style="position:absolute;left:486px;top:551px;width:40.5px;height:1.4px;background:#a5bcdc;"></div>
<div style="position:absolute;left:527px;top:551.00px;width:664px;height:0;border-top:1.2px dotted #c2c2c2"></div>
<span style="position:absolute;white-space:nowrap;left:529.5px;top:531.80px;line-height:20px;font-size:15.4px;color:#000;font-weight:normal;-webkit-text-stroke:0.15px #000;transform:scaleX(0.86);transform-origin:0 50%;">IMDLame</span>
<span style="position:absolute;white-space:nowrap;left:620.8px;top:531.80px;line-height:20px;font-size:15.4px;color:#000;font-weight:normal;-webkit-text-stroke:0.15px #000;transform:scaleX(0.86);transform-origin:0 50%;">Lames</span>
<svg style="position:absolute;left:932px;top:534.25px;" width="16" height="15.5" viewBox="0 0 16 15.500"><rect x="0.75" y="0.75" width="14.500" height="14" fill="#fff" stroke="#3c3c3c" stroke-width="1.5"/><path d="M3.2 7.200L6.700 11L13 3.800" fill="none" stroke="#555" stroke-width="1.5"/></svg>
<svg style="position:absolute;left:973.4px;top:534.25px;" width="16" height="15.5" viewBox="0 0 16 15.500"><rect x="0.75" y="0.75" width="14.500" height="14" fill="#fff" stroke="#3c3c3c" stroke-width="1.5"/></svg>
<span style="position:absolute;white-space:nowrap;left:1137px;top:531.80px;line-height:20px;font-size:15.4px;color:#000;font-weight:normal;-webkit-text-stroke:0.15px #000;width:62.21px;overflow:hidden;transform:scaleX(0.86);transform-origin:0 50%;">Séquenti</span>
<div style="position:absolute;left:526.5px;top:552px;width:664.5px;height:20px;background:#efefef;"></div>
<div style="position:absolute;left:486px;top:552px;width:40.5px;height:20px;background:#e3ebf7;"></div>
<div style="position:absolute;left:486px;top:571px;width:40.5px;height:1.4px;background:#a5bcdc;"></div>
<div style="position:absolute;left:527px;top:571.00px;width:664px;height:0;border-top:1.2px dotted #c2c2c2"></div>
<span style="position:absolute;white-space:nowrap;left:529.5px;top:551.80px;line-height:20px;font-size:15.4px;color:#000;font-weight:normal;-webkit-text-stroke:0.15px #000;transform:scaleX(0.86);transform-origin:0 50%;">IMdMulCh</span>
<span style="position:absolute;white-space:nowrap;left:620.8px;top:551.80px;line-height:20px;font-size:15.4px;color:#000;font-weight:normal;-webkit-text-stroke:0.15px #000;transform:scaleX(0.86);transform-origin:0 50%;">Multi Chassis</span>
<svg style="position:absolute;left:932px;top:554.25px;" width="16" height="15.5" viewBox="0 0 16 15.500"><rect x="0.75" y="0.75" width="14.500" height="14" fill="#fff" stroke="#3c3c3c" stroke-width="1.5"/><path d="M3.2 7.200L6.700 11L13 3.800" fill="none" stroke="#555" stroke-width="1.5"/></svg>
<svg style="position:absolute;left:973.4px;top:554.25px;" width="16" height="15.5" viewBox="0 0 16 15.500"><rect x="0.75" y="0.75" width="14.500" height="14" fill="#fff" stroke="#3c3c3c" stroke-width="1.5"/></svg>
<span style="position:absolute;white-space:nowrap;left:1005.3px;top:551.80px;line-height:20px;font-size:15.4px;color:#000;font-weight:normal;-webkit-text-stroke:0.15px #000;transform:scaleX(0.86);transform-origin:0 50%;">ISIA</span>
<span style="position:absolute;white-space:nowrap;left:1137px;top:551.80px;line-height:20px;font-size:15.4px;color:#000;font-weight:normal;-webkit-text-stroke:0.15px #000;width:62.21px;overflow:hidden;transform:scaleX(0.86);transform-origin:0 50%;">Séquenti</span>
<div style="position:absolute;left:526.5px;top:572px;width:664.5px;height:20px;background:#fff;"></div>
<div style="position:absolute;left:486px;top:572px;width:40.5px;height:20px;background:#e3ebf7;"></div>
<div style="position:absolute;left:486px;top:591px;width:40.5px;height:1.4px;background:#a5bcdc;"></div>
<div style="position:absolute;left:527px;top:591.00px;width:664px;height:0;border-top:1.2px dotted #c2c2c2"></div>
<span style="position:absolute;white-space:nowrap;left:529.5px;top:571.80px;line-height:20px;font-size:15.4px;color:#000;font-weight:normal;-webkit-text-stroke:0.15px #000;transform:scaleX(0.86);transform-origin:0 50%;">IMdMulCo</span>
<span style="position:absolute;white-space:nowrap;left:620.8px;top:571.80px;line-height:20px;font-size:15.4px;color:#000;font-weight:normal;-webkit-text-stroke:0.15px #000;transform:scaleX(0.86);transform-origin:0 50%;">Multi Composition</span>
<svg style="position:absolute;left:932px;top:574.25px;" width="16" height="15.5" viewBox="0 0 16 15.500"><rect x="0.75" y="0.75" width="14.500" height="14" fill="#fff" stroke="#3c3c3c" stroke-width="1.5"/><path d="M3.2 7.200L6.700 11L13 3.800" fill="none" stroke="#555" stroke-width="1.5"/></svg>
<svg style="position:absolute;left:973.4px;top:574.25px;" width="16" height="15.5" viewBox="0 0 16 15.500"><rect x="0.75" y="0.75" width="14.500" height="14" fill="#fff" stroke="#3c3c3c" stroke-width="1.5"/></svg>
<span style="position:absolute;white-space:nowrap;left:1005.3px;top:571.80px;line-height:20px;font-size:15.4px;color:#000;font-weight:normal;-webkit-text-stroke:0.15px #000;transform:scaleX(0.86);transform-origin:0 50%;">ISIA</span>
<span style="position:absolute;white-space:nowrap;left:1137px;top:571.80px;line-height:20px;font-size:15.4px;color:#000;font-weight:normal;-webkit-text-stroke:0.15px #000;width:62.21px;overflow:hidden;transform:scaleX(0.86);transform-origin:0 50%;">Séquenti</span>
<div style="position:absolute;left:526.5px;top:592px;width:664.5px;height:20px;background:#efefef;"></div>
<div style="position:absolute;left:486px;top:592px;width:40.5px;height:20px;background:#e3ebf7;"></div>
<div style="position:absolute;left:486px;top:611px;width:40.5px;height:1.4px;background:#a5bcdc;"></div>
<div style="position:absolute;left:527px;top:611.00px;width:664px;height:0;border-top:1.2px dotted #c2c2c2"></div>
<span style="position:absolute;white-space:nowrap;left:529.5px;top:591.80px;line-height:20px;font-size:15.4px;color:#000;font-weight:normal;-webkit-text-stroke:0.15px #000;transform:scaleX(0.86);transform-origin:0 50%;">IMdMulRe</span>
<span style="position:absolute;white-space:nowrap;left:620.8px;top:591.80px;line-height:20px;font-size:15.4px;color:#000;font-weight:normal;-webkit-text-stroke:0.15px #000;transform:scaleX(0.86);transform-origin:0 50%;">Multi Remplissage</span>
<svg style="position:absolute;left:932px;top:594.25px;" width="16" height="15.5" viewBox="0 0 16 15.500"><rect x="0.75" y="0.75" width="14.500" height="14" fill="#fff" stroke="#3c3c3c" stroke-width="1.5"/><path d="M3.2 7.200L6.700 11L13 3.800" fill="none" stroke="#555" stroke-width="1.5"/></svg>
<svg style="position:absolute;left:973.4px;top:594.25px;" width="16" height="15.5" viewBox="0 0 16 15.500"><rect x="0.75" y="0.75" width="14.500" height="14" fill="#fff" stroke="#3c3c3c" stroke-width="1.5"/></svg>
<span style="position:absolute;white-space:nowrap;left:1005.3px;top:591.80px;line-height:20px;font-size:15.4px;color:#000;font-weight:normal;-webkit-text-stroke:0.15px #000;transform:scaleX(0.86);transform-origin:0 50%;">ISIA</span>
<span style="position:absolute;white-space:nowrap;left:1137px;top:591.80px;line-height:20px;font-size:15.4px;color:#000;font-weight:normal;-webkit-text-stroke:0.15px #000;width:62.21px;overflow:hidden;transform:scaleX(0.86);transform-origin:0 50%;">Séquenti</span>
<div style="position:absolute;left:526.5px;top:612px;width:664.5px;height:20px;background:#fff;"></div>
<div style="position:absolute;left:486px;top:612px;width:40.5px;height:20px;background:#e3ebf7;"></div>
<div style="position:absolute;left:486px;top:631px;width:40.5px;height:1.4px;background:#a5bcdc;"></div>
<div style="position:absolute;left:527px;top:631.00px;width:664px;height:0;border-top:1.2px dotted #c2c2c2"></div>
<span style="position:absolute;white-space:nowrap;left:529.5px;top:611.80px;line-height:20px;font-size:15.4px;color:#000;font-weight:normal;-webkit-text-stroke:0.15px #000;transform:scaleX(0.86);transform-origin:0 50%;">IMdMulZo</span>
<span style="position:absolute;white-space:nowrap;left:620.8px;top:611.80px;line-height:20px;font-size:15.4px;color:#000;font-weight:normal;-webkit-text-stroke:0.15px #000;transform:scaleX(0.86);transform-origin:0 50%;">Multi Zones</span>
<svg style="position:absolute;left:932px;top:614.25px;" width="16" height="15.5" viewBox="0 0 16 15.500"><rect x="0.75" y="0.75" width="14.500" height="14" fill="#fff" stroke="#3c3c3c" stroke-width="1.5"/><path d="M3.2 7.200L6.700 11L13 3.800" fill="none" stroke="#555" stroke-width="1.5"/></svg>
<svg style="position:absolute;left:973.4px;top:614.25px;" width="16" height="15.5" viewBox="0 0 16 15.500"><rect x="0.75" y="0.75" width="14.500" height="14" fill="#fff" stroke="#3c3c3c" stroke-width="1.5"/></svg>
<span style="position:absolute;white-space:nowrap;left:1005.3px;top:611.80px;line-height:20px;font-size:15.4px;color:#000;font-weight:normal;-webkit-text-stroke:0.15px #000;transform:scaleX(0.86);transform-origin:0 50%;">ISIA</span>
<span style="position:absolute;white-space:nowrap;left:1137px;top:611.80px;line-height:20px;font-size:15.4px;color:#000;font-weight:normal;-webkit-text-stroke:0.15px #000;width:62.21px;overflow:hidden;transform:scaleX(0.86);transform-origin:0 50%;">Séquenti</span>
<div style="position:absolute;left:526.5px;top:632px;width:664.5px;height:20px;background:#efefef;"></div>
<div style="position:absolute;left:486px;top:632px;width:40.5px;height:20px;background:#e3ebf7;"></div>
<div style="position:absolute;left:486px;top:651px;width:40.5px;height:1.4px;background:#a5bcdc;"></div>
<div style="position:absolute;left:527px;top:651.00px;width:664px;height:0;border-top:1.2px dotted #c2c2c2"></div>
<span style="position:absolute;white-space:nowrap;left:529.5px;top:631.80px;line-height:20px;font-size:15.4px;color:#000;font-weight:normal;-webkit-text-stroke:0.15px #000;transform:scaleX(0.86);transform-origin:0 50%;">IMdOptRe</span>
<span style="position:absolute;white-space:nowrap;left:620.8px;top:631.80px;line-height:20px;font-size:15.4px;color:#000;font-weight:normal;-webkit-text-stroke:0.15px #000;transform:scaleX(0.86);transform-origin:0 50%;">Options Remplissage</span>
<svg style="position:absolute;left:932px;top:634.25px;" width="16" height="15.5" viewBox="0 0 16 15.500"><rect x="0.75" y="0.75" width="14.500" height="14" fill="#fff" stroke="#3c3c3c" stroke-width="1.5"/><path d="M3.2 7.200L6.700 11L13 3.800" fill="none" stroke="#555" stroke-width="1.5"/></svg>
<svg style="position:absolute;left:973.4px;top:634.25px;" width="16" height="15.5" viewBox="0 0 16 15.500"><rect x="0.75" y="0.75" width="14.500" height="14" fill="#fff" stroke="#3c3c3c" stroke-width="1.5"/></svg>
<span style="position:absolute;white-space:nowrap;left:1005.3px;top:631.80px;line-height:20px;font-size:15.4px;color:#000;font-weight:normal;-webkit-text-stroke:0.15px #000;transform:scaleX(0.86);transform-origin:0 50%;">ISIA</span>
<span style="position:absolute;white-space:nowrap;left:1137px;top:631.80px;line-height:20px;font-size:15.4px;color:#000;font-weight:normal;-webkit-text-stroke:0.15px #000;width:62.21px;overflow:hidden;transform:scaleX(0.86);transform-origin:0 50%;">Séquenti</span>
<div style="position:absolute;left:526.5px;top:652px;width:664.5px;height:20px;background:#fff;"></div>
<div style="position:absolute;left:486px;top:652px;width:40.5px;height:20px;background:#e3ebf7;"></div>
<div style="position:absolute;left:486px;top:671px;width:40.5px;height:1.4px;background:#a5bcdc;"></div>
<div style="position:absolute;left:527px;top:671.00px;width:664px;height:0;border-top:1.2px dotted #c2c2c2"></div>
<span style="position:absolute;white-space:nowrap;left:529.5px;top:651.80px;line-height:20px;font-size:15.4px;color:#000;font-weight:normal;-webkit-text-stroke:0.15px #000;transform:scaleX(0.86);transform-origin:0 50%;">IMDPanne</span>
<span style="position:absolute;white-space:nowrap;left:620.8px;top:651.80px;line-height:20px;font-size:15.4px;color:#000;font-weight:normal;-webkit-text-stroke:0.15px #000;transform:scaleX(0.86);transform-origin:0 50%;">Panneaux</span>
<svg style="position:absolute;left:932px;top:654.25px;" width="16" height="15.5" viewBox="0 0 16 15.500"><rect x="0.75" y="0.75" width="14.500" height="14" fill="#fff" stroke="#3c3c3c" stroke-width="1.5"/><path d="M3.2 7.200L6.700 11L13 3.800" fill="none" stroke="#555" stroke-width="1.5"/></svg>
<svg style="position:absolute;left:973.4px;top:654.25px;" width="16" height="15.5" viewBox="0 0 16 15.500"><rect x="0.75" y="0.75" width="14.500" height="14" fill="#fff" stroke="#3c3c3c" stroke-width="1.5"/></svg>
<span style="position:absolute;white-space:nowrap;left:1137px;top:651.80px;line-height:20px;font-size:15.4px;color:#000;font-weight:normal;-webkit-text-stroke:0.15px #000;width:62.21px;overflow:hidden;transform:scaleX(0.86);transform-origin:0 50%;">Séquenti</span>
<div style="position:absolute;left:526.5px;top:672px;width:664.5px;height:20px;background:#efefef;"></div>
<div style="position:absolute;left:486px;top:672px;width:40.5px;height:20px;background:#e3ebf7;"></div>
<div style="position:absolute;left:486px;top:691px;width:40.5px;height:1.4px;background:#a5bcdc;"></div>
<div style="position:absolute;left:527px;top:691.00px;width:664px;height:0;border-top:1.2px dotted #c2c2c2"></div>
<span style="position:absolute;white-space:nowrap;left:529.5px;top:671.80px;line-height:20px;font-size:15.4px;color:#000;font-weight:normal;-webkit-text-stroke:0.15px #000;transform:scaleX(0.86);transform-origin:0 50%;">IMdPoOpF</span>
<span style="position:absolute;white-space:nowrap;left:620.8px;top:671.80px;line-height:20px;font-size:15.4px;color:#000;font-weight:normal;-webkit-text-stroke:0.15px #000;transform:scaleX(0.86);transform-origin:0 50%;">Position Options</span>
<svg style="position:absolute;left:932px;top:674.25px;" width="16" height="15.5" viewBox="0 0 16 15.500"><rect x="0.75" y="0.75" width="14.500" height="14" fill="#fff" stroke="#3c3c3c" stroke-width="1.5"/><path d="M3.2 7.200L6.700 11L13 3.800" fill="none" stroke="#555" stroke-width="1.5"/></svg>
<svg style="position:absolute;left:973.4px;top:674.25px;" width="16" height="15.5" viewBox="0 0 16 15.500"><rect x="0.75" y="0.75" width="14.500" height="14" fill="#fff" stroke="#3c3c3c" stroke-width="1.5"/></svg>
<span style="position:absolute;white-space:nowrap;left:1005.3px;top:671.80px;line-height:20px;font-size:15.4px;color:#000;font-weight:normal;-webkit-text-stroke:0.15px #000;transform:scaleX(0.86);transform-origin:0 50%;">ISIA</span>
<span style="position:absolute;white-space:nowrap;left:1137px;top:671.80px;line-height:20px;font-size:15.4px;color:#000;font-weight:normal;-webkit-text-stroke:0.15px #000;width:62.21px;overflow:hidden;transform:scaleX(0.86);transform-origin:0 50%;">Séquenti</span>
<div style="position:absolute;left:526.5px;top:692px;width:664.5px;height:20px;background:#fff;"></div>
<div style="position:absolute;left:486px;top:692px;width:40.5px;height:20px;background:#e3ebf7;"></div>
<div style="position:absolute;left:486px;top:711px;width:40.5px;height:1.4px;background:#a5bcdc;"></div>
<div style="position:absolute;left:527px;top:711.00px;width:664px;height:0;border-top:1.2px dotted #c2c2c2"></div>
<span style="position:absolute;white-space:nowrap;left:529.5px;top:691.80px;line-height:20px;font-size:15.4px;color:#000;font-weight:normal;-webkit-text-stroke:0.15px #000;transform:scaleX(0.86);transform-origin:0 50%;">IMDRenfo</span>
<span style="position:absolute;white-space:nowrap;left:620.8px;top:691.80px;line-height:20px;font-size:15.4px;color:#000;font-weight:normal;-webkit-text-stroke:0.15px #000;transform:scaleX(0.86);transform-origin:0 50%;">Renforts</span>
<svg style="position:absolute;left:932px;top:694.25px;" width="16" height="15.5" viewBox="0 0 16 15.500"><rect x="0.75" y="0.75" width="14.500" height="14" fill="#fff" stroke="#3c3c3c" stroke-width="1.5"/><path d="M3.2 7.200L6.700 11L13 3.800" fill="none" stroke="#555" stroke-width="1.5"/></svg>
<svg style="position:absolute;left:973.4px;top:694.25px;" width="16" height="15.5" viewBox="0 0 16 15.500"><rect x="0.75" y="0.75" width="14.500" height="14" fill="#fff" stroke="#3c3c3c" stroke-width="1.5"/><path d="M3.2 7.200L6.700 11L13 3.800" fill="none" stroke="#555" stroke-width="1.5"/></svg>
<span style="position:absolute;white-space:nowrap;left:1137px;top:691.80px;line-height:20px;font-size:15.4px;color:#000;font-weight:normal;-webkit-text-stroke:0.15px #000;width:62.21px;overflow:hidden;transform:scaleX(0.86);transform-origin:0 50%;">Séquenti</span>
<div style="position:absolute;left:526.5px;top:712px;width:664.5px;height:20px;background:#efefef;"></div>
<div style="position:absolute;left:486px;top:712px;width:40.5px;height:20px;background:#e3ebf7;"></div>
<div style="position:absolute;left:486px;top:731px;width:40.5px;height:1.4px;background:#a5bcdc;"></div>
<div style="position:absolute;left:527px;top:731.00px;width:664px;height:0;border-top:1.2px dotted #c2c2c2"></div>
<span style="position:absolute;white-space:nowrap;left:529.5px;top:711.80px;line-height:20px;font-size:15.4px;color:#000;font-weight:normal;-webkit-text-stroke:0.15px #000;transform:scaleX(0.86);transform-origin:0 50%;">IMdTypRe</span>
<span style="position:absolute;white-space:nowrap;left:620.8px;top:711.80px;line-height:20px;font-size:15.4px;color:#000;font-weight:normal;-webkit-text-stroke:0.15px #000;transform:scaleX(0.86);transform-origin:0 50%;">Type Remplissage</span>
<svg style="position:absolute;left:932px;top:714.25px;" width="16" height="15.5" viewBox="0 0 16 15.500"><rect x="0.75" y="0.75" width="14.500" height="14" fill="#fff" stroke="#3c3c3c" stroke-width="1.5"/><path d="M3.2 7.200L6.700 11L13 3.800" fill="none" stroke="#555" stroke-width="1.5"/></svg>
<svg style="position:absolute;left:973.4px;top:714.25px;" width="16" height="15.5" viewBox="0 0 16 15.500"><rect x="0.75" y="0.75" width="14.500" height="14" fill="#fff" stroke="#3c3c3c" stroke-width="1.5"/></svg>
<span style="position:absolute;white-space:nowrap;left:1005.3px;top:711.80px;line-height:20px;font-size:15.4px;color:#000;font-weight:normal;-webkit-text-stroke:0.15px #000;transform:scaleX(0.86);transform-origin:0 50%;">ISIA</span>
<span style="position:absolute;white-space:nowrap;left:1137px;top:711.80px;line-height:20px;font-size:15.4px;color:#000;font-weight:normal;-webkit-text-stroke:0.15px #000;width:62.21px;overflow:hidden;transform:scaleX(0.86);transform-origin:0 50%;">Séquenti</span>
<div style="position:absolute;left:526.5px;top:732px;width:664.5px;height:20px;background:#fff;"></div>
<div style="position:absolute;left:486px;top:732px;width:40.5px;height:20px;background:#e3ebf7;"></div>
<div style="position:absolute;left:486px;top:751px;width:40.5px;height:1.4px;background:#a5bcdc;"></div>
<div style="position:absolute;left:527px;top:751.00px;width:664px;height:0;border-top:1.2px dotted #c2c2c2"></div>
<span style="position:absolute;white-space:nowrap;left:529.5px;top:731.80px;line-height:20px;font-size:15.4px;color:#000;font-weight:normal;-webkit-text-stroke:0.15px #000;transform:scaleX(0.86);transform-origin:0 50%;">IMDVitrag</span>
<span style="position:absolute;white-space:nowrap;left:620.8px;top:731.80px;line-height:20px;font-size:15.4px;color:#000;font-weight:normal;-webkit-text-stroke:0.15px #000;transform:scaleX(0.86);transform-origin:0 50%;">Vitrages</span>
<svg style="position:absolute;left:890.7px;top:734.25px;" width="16" height="15.5" viewBox="0 0 16 15.500"><rect x="0.75" y="0.75" width="14.500" height="14" fill="#fff" stroke="#3c3c3c" stroke-width="1.5"/><path d="M3.2 7.200L6.700 11L13 3.800" fill="none" stroke="#555" stroke-width="1.5"/></svg>
<svg style="position:absolute;left:932px;top:734.25px;" width="16" height="15.5" viewBox="0 0 16 15.500"><rect x="0.75" y="0.75" width="14.500" height="14" fill="#fff" stroke="#3c3c3c" stroke-width="1.5"/><path d="M3.2 7.200L6.700 11L13 3.800" fill="none" stroke="#555" stroke-width="1.5"/></svg>
<svg style="position:absolute;left:973.4px;top:734.25px;" width="16" height="15.5" viewBox="0 0 16 15.500"><rect x="0.75" y="0.75" width="14.500" height="14" fill="#fff" stroke="#3c3c3c" stroke-width="1.5"/></svg>
<span style="position:absolute;white-space:nowrap;left:1137px;top:731.80px;line-height:20px;font-size:15.4px;color:#000;font-weight:normal;-webkit-text-stroke:0.15px #000;width:62.21px;overflow:hidden;transform:scaleX(0.86);transform-origin:0 50%;">Séquenti</span>
<div style="position:absolute;left:526.5px;top:752px;width:664.5px;height:20px;background:#efefef;"></div>
<div style="position:absolute;left:486px;top:752px;width:40.5px;height:20px;background:#e3ebf7;"></div>
<div style="position:absolute;left:486px;top:771px;width:40.5px;height:1.4px;background:#a5bcdc;"></div>
<div style="position:absolute;left:527px;top:771.00px;width:664px;height:0;border-top:1.2px dotted #c2c2c2"></div>
<span style="position:absolute;white-space:nowrap;left:529.5px;top:751.80px;line-height:20px;font-size:15.4px;color:#000;font-weight:normal;-webkit-text-stroke:0.15px #000;transform:scaleX(0.86);transform-origin:0 50%;">INoComNom</span>
<span style="position:absolute;white-space:nowrap;left:620.8px;top:751.80px;line-height:20px;font-size:15.4px;color:#000;font-weight:normal;-webkit-text-stroke:0.15px #000;transform:scaleX(0.86);transform-origin:0 50%;">Psd critere / Doc INoComNom</span>
<svg style="position:absolute;left:890.7px;top:754.25px;" width="16" height="15.5" viewBox="0 0 16 15.500"><rect x="0.75" y="0.75" width="14.500" height="14" fill="#fff" stroke="#3c3c3c" stroke-width="1.5"/><path d="M3.2 7.200L6.700 11L13 3.800" fill="none" stroke="#555" stroke-width="1.5"/></svg>
<svg style="position:absolute;left:932px;top:754.25px;" width="16" height="15.5" viewBox="0 0 16 15.500"><rect x="0.75" y="0.75" width="14.500" height="14" fill="#fff" stroke="#3c3c3c" stroke-width="1.5"/><path d="M3.2 7.200L6.700 11L13 3.800" fill="none" stroke="#555" stroke-width="1.5"/></svg>
<svg style="position:absolute;left:973.4px;top:754.25px;" width="16" height="15.5" viewBox="0 0 16 15.500"><rect x="0.75" y="0.75" width="14.500" height="14" fill="#fff" stroke="#3c3c3c" stroke-width="1.5"/></svg>
<span style="position:absolute;white-space:nowrap;left:1137px;top:751.80px;line-height:20px;font-size:15.4px;color:#000;font-weight:normal;-webkit-text-stroke:0.15px #000;width:62.21px;overflow:hidden;transform:scaleX(0.86);transform-origin:0 50%;">Séquenti</span>
<div style="position:absolute;left:526.5px;top:772px;width:664.5px;height:20px;background:#fff;"></div>
<div style="position:absolute;left:486px;top:772px;width:40.5px;height:20px;background:#e3ebf7;"></div>
<div style="position:absolute;left:486px;top:791px;width:40.5px;height:1.4px;background:#a5bcdc;"></div>
<div style="position:absolute;left:527px;top:791.00px;width:664px;height:0;border-top:1.2px dotted #c2c2c2"></div>
<span style="position:absolute;white-space:nowrap;left:529.5px;top:771.80px;line-height:20px;font-size:15.4px;color:#000;font-weight:normal;-webkit-text-stroke:0.15px #000;transform:scaleX(0.86);transform-origin:0 50%;">INoDTNom</span>
<span style="position:absolute;white-space:nowrap;left:620.8px;top:771.80px;line-height:20px;font-size:15.4px;color:#000;font-weight:normal;-webkit-text-stroke:0.15px #000;transform:scaleX(0.86);transform-origin:0 50%;">Parametre DT Nomenclature</span>
<svg style="position:absolute;left:890.7px;top:774.25px;" width="16" height="15.5" viewBox="0 0 16 15.500"><rect x="0.75" y="0.75" width="14.500" height="14" fill="#fff" stroke="#3c3c3c" stroke-width="1.5"/><path d="M3.2 7.200L6.700 11L13 3.800" fill="none" stroke="#555" stroke-width="1.5"/></svg>
<svg style="position:absolute;left:932px;top:774.25px;" width="16" height="15.5" viewBox="0 0 16 15.500"><rect x="0.75" y="0.75" width="14.500" height="14" fill="#fff" stroke="#3c3c3c" stroke-width="1.5"/><path d="M3.2 7.200L6.700 11L13 3.800" fill="none" stroke="#555" stroke-width="1.5"/></svg>
<svg style="position:absolute;left:973.4px;top:774.25px;" width="16" height="15.5" viewBox="0 0 16 15.500"><rect x="0.75" y="0.75" width="14.500" height="14" fill="#fff" stroke="#3c3c3c" stroke-width="1.5"/><path d="M3.2 7.200L6.700 11L13 3.800" fill="none" stroke="#555" stroke-width="1.5"/></svg>
<span style="position:absolute;white-space:nowrap;left:1005.3px;top:771.80px;line-height:20px;font-size:15.4px;color:#000;font-weight:normal;-webkit-text-stroke:0.15px #000;transform:scaleX(0.86);transform-origin:0 50%;">ISIA</span>
<span style="position:absolute;white-space:nowrap;left:1137px;top:771.80px;line-height:20px;font-size:15.4px;color:#000;font-weight:normal;-webkit-text-stroke:0.15px #000;width:62.21px;overflow:hidden;transform:scaleX(0.86);transform-origin:0 50%;">Séquenti</span>
<div style="position:absolute;left:616.9px;top:272px;width:0;height:520px;border-left:1.2px dotted #c2c2c2"></div>
<div style="position:absolute;left:878.4px;top:272px;width:0;height:520px;border-left:1.2px dotted #c2c2c2"></div>
<div style="position:absolute;left:919.4px;top:272px;width:0;height:520px;border-left:1.2px dotted #c2c2c2"></div>
<div style="position:absolute;left:960.9px;top:272px;width:0;height:520px;border-left:1.2px dotted #c2c2c2"></div>
<div style="position:absolute;left:1001.9px;top:272px;width:0;height:520px;border-left:1.2px dotted #c2c2c2"></div>
<div style="position:absolute;left:1133.4px;top:272px;width:0;height:520px;border-left:1.2px dotted #c2c2c2"></div>
<div style="position:absolute;left:1190.4px;top:272px;width:0;height:520px;border-left:1.2px dotted #c2c2c2"></div>
<div style="position:absolute;left:525.8px;top:272px;width:1.4px;height:520px;background:#a5bcdc;"></div>
<div style="position:absolute;left:486px;top:250px;width:705px;height:22px;background:linear-gradient(#f5f8fc 0%,#eaf0f8 45%,#dbe5f3 55%,#e0e9f5 100%);"></div>
<div style="position:absolute;left:486px;top:250px;width:40.5px;height:22px;background:#aec6ea;"></div>
<svg style="position:absolute;left:510.5px;top:256.5px;" width="10.5" height="10.5" viewBox="0 0 10.5 10.5"><path d="M10.5 0V10.500H0z" fill="#e6edf9"/></svg>
<div style="position:absolute;left:526.5px;top:250px;width:91px;height:22px;background:linear-gradient(#fbdc9f 0%,#fbcb7d 45%,#f8b456 55%,#f9bd68 100%);"></div>
<div style="position:absolute;left:525.8px;top:250px;width:1.4px;height:22px;background:#9bb7df;"></div>
<div style="position:absolute;left:616.8px;top:250px;width:1.4px;height:22px;background:#9bb7df;"></div>
<span style="position:absolute;white-space:nowrap;left:572.0px;top:250.60px;line-height:20px;font-size:15.4px;color:#000;font-weight:normal;-webkit-text-stroke:0.15px #000;transform:translateX(-50%) scaleX(0.86);transform-origin:50% 50%;">Référence</span>
<div style="position:absolute;left:878.3px;top:250px;width:1.4px;height:22px;background:#9bb7df;"></div>
<span style="position:absolute;white-space:nowrap;left:748.25px;top:250.60px;line-height:20px;font-size:15.4px;color:#000;font-weight:normal;-webkit-text-stroke:0.15px #000;transform:translateX(-50%) scaleX(0.86);transform-origin:50% 50%;">Désignation</span>
<div style="position:absolute;left:919.3px;top:250px;width:1.4px;height:22px;background:#9bb7df;"></div>
<span style="position:absolute;white-space:nowrap;left:899.5px;top:250.60px;line-height:20px;font-size:15.4px;color:#000;font-weight:normal;-webkit-text-stroke:0.15px #000;transform:translateX(-50%) scaleX(0.86);transform-origin:50% 50%;">Déf?</span>
<div style="position:absolute;left:960.8px;top:250px;width:1.4px;height:22px;background:#9bb7df;"></div>
<span style="position:absolute;white-space:nowrap;left:940.75px;top:250.60px;line-height:20px;font-size:15.4px;color:#000;font-weight:normal;-webkit-text-stroke:0.15px #000;transform:translateX(-50%) scaleX(0.86);transform-origin:50% 50%;">For?</span>
<div style="position:absolute;left:1001.8px;top:250px;width:1.4px;height:22px;background:#9bb7df;"></div>
<span style="position:absolute;white-space:nowrap;left:982.0px;top:250.60px;line-height:20px;font-size:15.4px;color:#000;font-weight:normal;-webkit-text-stroke:0.15px #000;transform:translateX(-50%) scaleX(0.86);transform-origin:50% 50%;">Act?</span>
<div style="position:absolute;left:1133.3px;top:250px;width:1.4px;height:22px;background:#9bb7df;"></div>
<span style="position:absolute;white-space:nowrap;left:1068.25px;top:250.60px;line-height:20px;font-size:15.4px;color:#000;font-weight:normal;-webkit-text-stroke:0.15px #000;transform:translateX(-50%) scaleX(0.86);transform-origin:50% 50%;">Mot Directeur</span>
<div style="position:absolute;left:1190.3px;top:250px;width:1.4px;height:22px;background:#9bb7df;"></div>
<span style="position:absolute;white-space:nowrap;left:1142.3px;top:250.60px;line-height:20px;font-size:15.4px;color:#000;font-weight:normal;-webkit-text-stroke:0.15px #000;width:56.40px;overflow:hidden;transform:scaleX(0.86);transform-origin:0 50%;">Dérouler</span>
<div style="position:absolute;left:486px;top:271px;width:705px;height:1px;background:#a9c1e4;"></div>
<div style="position:absolute;left:526.5px;top:271px;width:91px;height:1px;background:#f0a24a;"></div>
<div style="position:absolute;left:526.5px;top:272px;width:91.500px;height:21px;box-sizing:border-box;border:1.6px solid #111;border-bottom:2.500px dotted #111;border-right:3px solid #111"></div>
<div style="position:absolute;left:1191px;top:250px;width:20px;height:530px;background:#7096c1;"></div>
<div style="position:absolute;left:1191px;top:250px;width:20px;height:19.5px;background:linear-gradient(#dfe9f8,#b9cdec);box-sizing:border-box;border:1px solid #e9f0fb"></div>
<svg style="position:absolute;left:1195.5px;top:255.5px;" width="11.5" height="7" viewBox="0 0 11.5 7"><path d="M0 7h11.500L5.750 0z" fill="#3e4f6e"/></svg>
<div style="position:absolute;left:1192px;top:529px;width:18px;height:196px;background:linear-gradient(90deg,#d9e5f9 0%,#d3e1f7 50%,#c4d7f3 52%,#c4d7f3 100%);box-sizing:border-box;border:1px solid #6485b8"></div>
<div style="position:absolute;left:485px;top:249px;width:1.2px;height:531px;background:#7d8594;"></div>
<div style="position:absolute;left:485.5px;top:249px;width:726.5px;height:1.4px;background:#5f6066;"></div>
<div style="position:absolute;left:1211px;top:248.6px;width:1.4px;height:532px;background:#5f6066;"></div>
<svg style="position:absolute;left:1218px;top:250px;" width="115" height="532" viewBox="0 0 115 532"><path d="M1.5 532V28.500a1.500 1.500 0 0 1 1.500-1.500H9.500c1.500 0 2.200-1 3-2.500L21.500 7c1.500-3 3-4.500 6-4.500H115" fill="#f0f0f0" stroke="#a3a4aa" stroke-width="1.3"/><path d="M2.700 532V28.200H10" fill="none" stroke="#fff" stroke-width="1"/></svg>
<svg style="position:absolute;left:1241.5px;top:255.5px;" width="16" height="19" viewBox="0 0 16 19"><path d="M6 0h6.500L16 3.500V14H6z" fill="#e9e2d6" stroke="#c9c2b4" stroke-width="0.600"/><path d="M0.500 4.500h7l3.500 3.500V18.500H0.500z" fill="#f6f1e8" stroke="#cfc8ba" stroke-width="0.600"/><path d="M7.500 4.500V8H11" fill="#d9d2c4"/></svg>
<span style="position:absolute;white-space:nowrap;left:1263.5px;top:254.70px;line-height:20px;font-size:15.4px;color:#000;font-weight:bold;-webkit-text-stroke:0.15px #000;transform:scaleX(0.92);transform-origin:0 50%;">Définition</span>
<span style="position:absolute;white-space:nowrap;left:1284px;top:283.10px;line-height:20px;font-size:15.4px;color:#000;font-weight:normal;-webkit-text-stroke:0.15px #000;transform:scaleX(0.86);transform-origin:0 50%;">Référence</span>
<span style="position:absolute;white-space:nowrap;left:1276px;top:306.60px;line-height:20px;font-size:15.4px;color:#000;font-weight:normal;-webkit-text-stroke:0.15px #000;transform:scaleX(0.86);transform-origin:0 50%;">Désignation</span>
<span style="position:absolute;white-space:nowrap;left:1266.5px;top:330.80px;line-height:20px;font-size:15.4px;color:#000;font-weight:normal;-webkit-text-stroke:0.15px #000;transform:scaleX(0.86);transform-origin:0 50%;">Mot Directeur</span>
<span style="position:absolute;white-space:nowrap;left:1271.5px;top:355.80px;line-height:20px;font-size:15.4px;color:#000;font-weight:normal;-webkit-text-stroke:0.15px #000;transform:scaleX(0.86);transform-origin:0 50%;">Déroulement</span>
<span style="position:absolute;white-space:nowrap;left:1284px;top:385.30px;line-height:20px;font-size:15.4px;color:#000;font-weight:normal;-webkit-text-stroke:0.15px #000;transform:scaleX(0.86);transform-origin:0 50%;">Ergonomie</span>
<span style="position:absolute;white-space:nowrap;left:1276px;top:410.80px;line-height:20px;font-size:15.4px;color:#000;font-weight:normal;-webkit-text-stroke:0.15px #000;transform:scaleX(0.86);transform-origin:0 50%;">Lar. Libellé</span>
<span style="position:absolute;white-space:nowrap;left:1281.5px;top:434.80px;line-height:20px;font-size:15.4px;color:#000;font-weight:normal;-webkit-text-stroke:0.15px #000;transform:scaleX(0.86);transform-origin:0 50%;">Style Fiche</span>
<span style="position:absolute;white-space:nowrap;left:1235.5px;top:458.80px;line-height:20px;font-size:15.4px;color:#000;font-weight:normal;-webkit-text-stroke:0.15px #000;transform:scaleX(0.86);transform-origin:0 50%;">Couleur Zone Courante</span>
<span style="position:absolute;white-space:nowrap;left:1270.5px;top:487.30px;line-height:20px;font-size:15.4px;color:#000;font-weight:normal;-webkit-text-stroke:0.15px #000;transform:scaleX(0.86);transform-origin:0 50%;">Commentaire</span>
<div style="position:absolute;left:591.4px;top:280.8px;width:329.6px;height:454.40000000000003px;box-sizing:border-box;background:#f2f2f2;border:1px solid #cdcdcd;box-shadow:1px 1px 2px rgba(0,0,0,0.12)"></div>
<span style="position:absolute;white-space:nowrap;left:635.5px;top:287.4px;line-height:20px;font-size:15px;color:#161616;font-weight:normal;letter-spacing:-0.29px;">Création (F9)</span>
<span style="position:absolute;white-space:nowrap;left:635.5px;top:314.9px;line-height:20px;font-size:15px;color:#161616;font-weight:normal;letter-spacing:0.04px;">Modification (F1)</span>
<span style="position:absolute;white-space:nowrap;left:635.5px;top:342.4px;line-height:20px;font-size:15px;color:#161616;font-weight:normal;letter-spacing:0.05px;">Modification Globale (Maj+F1)</span>
<span style="position:absolute;white-space:nowrap;left:635.5px;top:369.9px;line-height:20px;font-size:15px;color:#161616;font-weight:normal;letter-spacing:-0.13px;">Duplication (F7)</span>
<span style="position:absolute;white-space:nowrap;left:635.5px;top:397.4px;line-height:20px;font-size:15px;color:#161616;font-weight:normal;letter-spacing:-0.46px;">Suppression (F6)</span>
<span style="position:absolute;white-space:nowrap;left:635.5px;top:424.9px;line-height:20px;font-size:15px;color:#161616;font-weight:normal;letter-spacing:-0.49px;">Détail (F8)</span>
<div style="position:absolute;left:629.6px;top:452.4px;width:287.4px;height:1.1px;background:#d9d9d9;"></div>
<span style="position:absolute;white-space:nowrap;left:635.5px;top:461.15px;line-height:20px;font-size:15px;color:#161616;font-weight:normal;letter-spacing:-0.36px;">Accès Requête(s) (Ctrl+F10)</span>
<div style="position:absolute;left:629.6px;top:488.65px;width:287.4px;height:1.1px;background:#d9d9d9;"></div>
<span style="position:absolute;white-space:nowrap;left:635.5px;top:497.4px;line-height:20px;font-size:15px;color:#161616;font-weight:normal;letter-spacing:-0.14px;">Consultation Questionnaire (F12)</span>
<span style="position:absolute;white-space:nowrap;left:635.5px;top:524.9px;line-height:20px;font-size:15px;color:#161616;font-weight:normal;letter-spacing:-0.26px;">Test Questionnaire (F11)</span>
<div style="position:absolute;left:593px;top:549.0px;width:324px;height:27.2px;background:#8fc864;"></div>
<span style="position:absolute;white-space:nowrap;left:635.5px;top:552.4px;line-height:20px;font-size:15px;color:#161616;font-weight:normal;letter-spacing:-0.32px;">Accès Questionnaire (F10)</span>
<span style="position:absolute;white-space:nowrap;left:635.5px;top:579.9px;line-height:20px;font-size:15px;color:#8b8b8b;font-weight:normal;letter-spacing:-0.13px;">Cas d'Emploi Questionnaire</span>
<div style="position:absolute;left:629.6px;top:607.4px;width:287.4px;height:1.1px;background:#d9d9d9;"></div>
<span style="position:absolute;white-space:nowrap;left:635.5px;top:616.15px;line-height:20px;font-size:15px;color:#161616;font-weight:normal;letter-spacing:-0.19px;">Exportation</span>
<svg style="position:absolute;left:899.5px;top:621.25px;" width="6" height="10" viewBox="0 0 6 10"><path d="M0.8 0.8L5 5L0.8 9.2" fill="none" stroke="#333" stroke-width="1.3"/></svg>
<span style="position:absolute;white-space:nowrap;left:635.5px;top:643.65px;line-height:20px;font-size:15px;color:#161616;font-weight:normal;letter-spacing:-0.06px;">Importation de Données</span>
<div style="position:absolute;left:629.6px;top:671.15px;width:287.4px;height:1.1px;background:#d9d9d9;"></div>
<span style="position:absolute;white-space:nowrap;left:635.5px;top:679.9px;line-height:20px;font-size:15px;color:#161616;font-weight:normal;letter-spacing:-0.13px;">Définition Filtres et Tris</span>
<span style="position:absolute;white-space:nowrap;left:635.5px;top:707.4px;line-height:20px;font-size:15px;color:#161616;font-weight:normal;letter-spacing:0.04px;">Condition par Défaut</span>
<svg style="position:absolute;left:857px;top:559.5px;filter:drop-shadow(1px 1.5px 1px rgba(0,0,0,0.35))" width="16" height="22" viewBox="0 0 16 22"><path d="M1.2 1.500V18.300L5.200 14.600L8.100 20.600L10.800 19.400L8 13.600L13.200 13.200z" fill="#f3ee55" stroke="#1b2040" stroke-width="1.300" stroke-linejoin="round"/><path d="M6 15.200L8.300 19.800L10 19L7.800 14.300z" fill="#fff"/></svg>
</div></body></html>
